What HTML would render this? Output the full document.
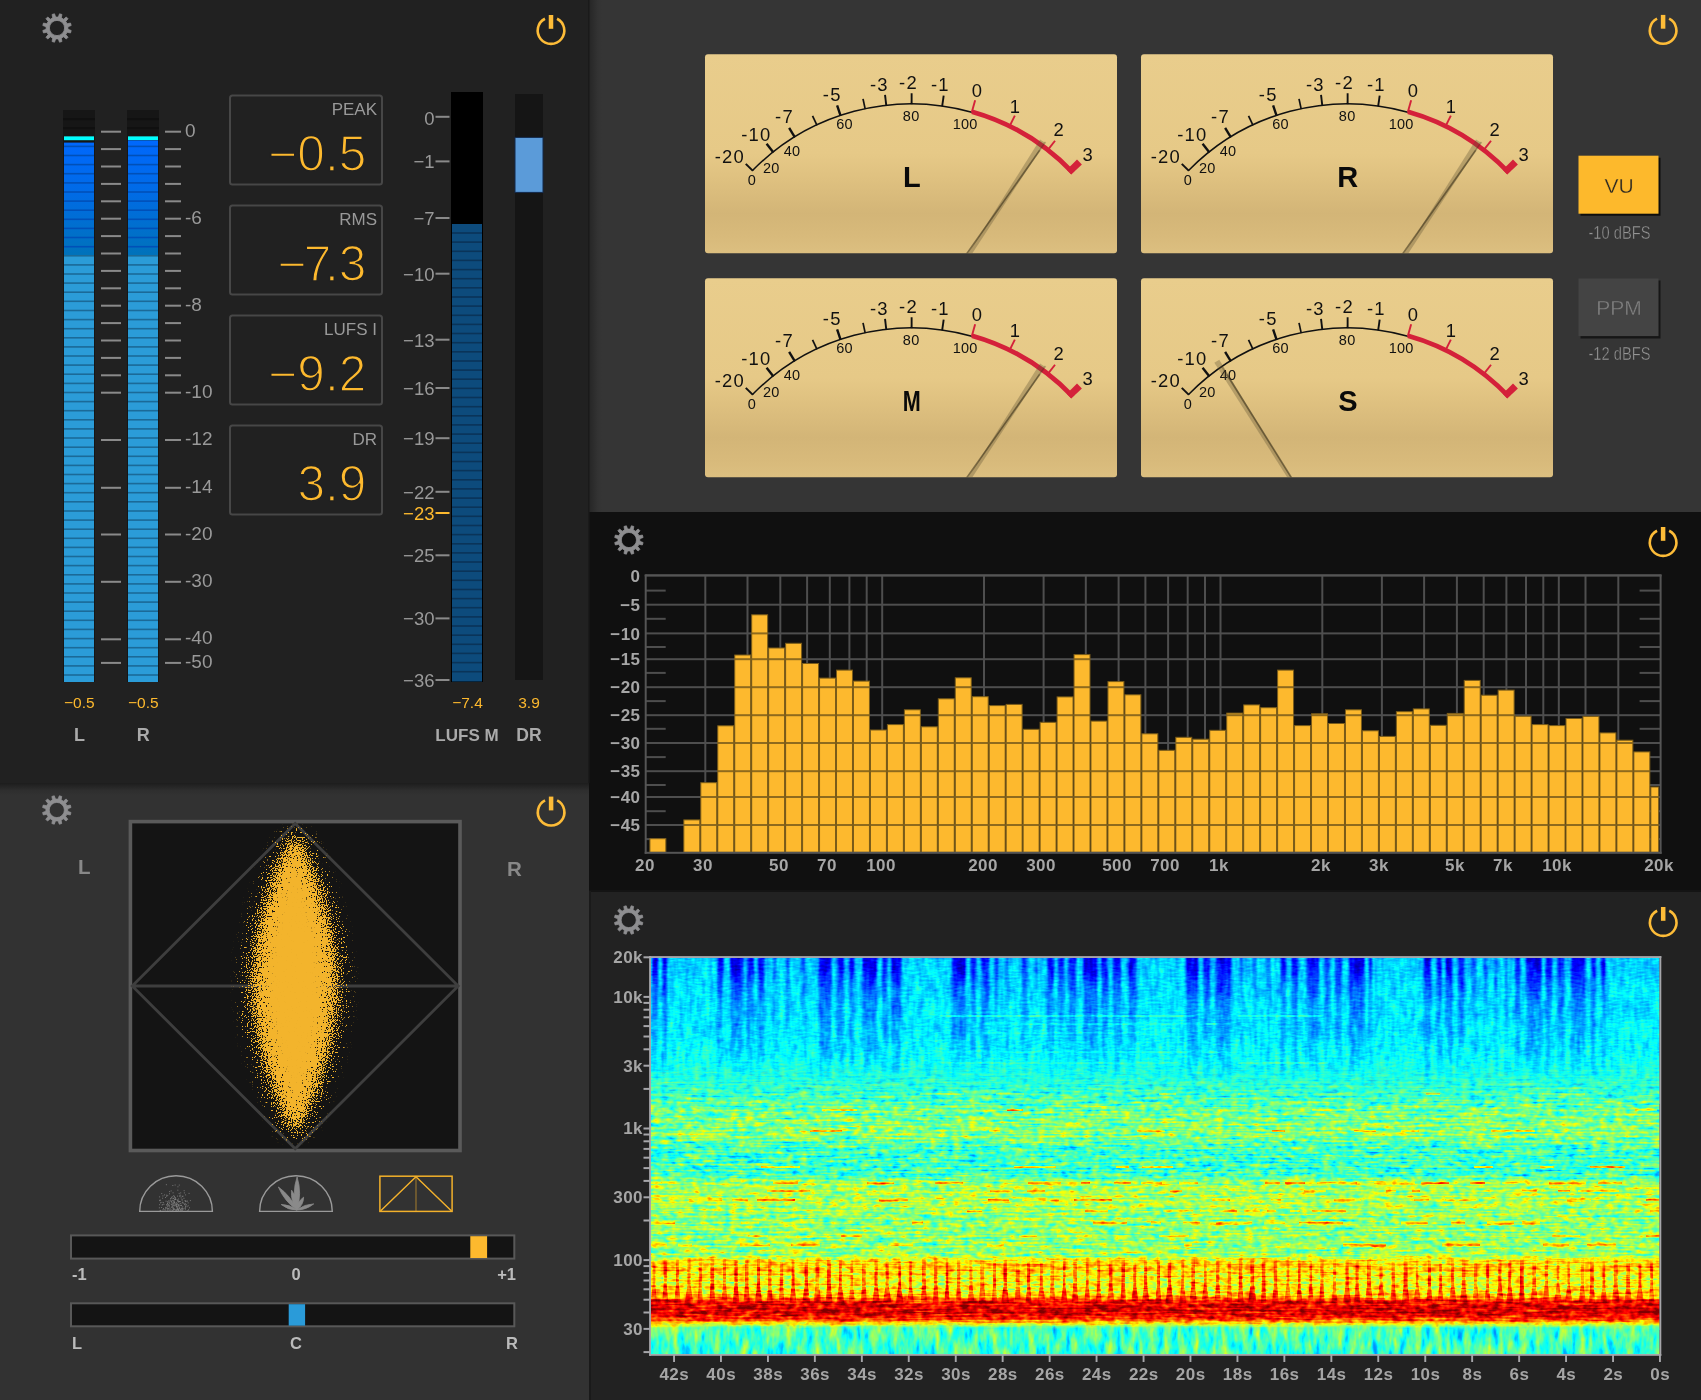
<!DOCTYPE html>
<html><head><meta charset="utf-8"><title>Audio Meters</title>
<style>
html,body{margin:0;padding:0;background:#222;overflow:hidden}
#app{position:relative;width:1701px;height:1400px;overflow:hidden;font-family:"Liberation Sans",Arial,sans-serif}
svg{display:block;position:absolute;left:0;top:0;will-change:transform}
text{white-space:pre}
</style></head><body><div id="app">
<svg width="1701" height="1400" viewBox="0 0 1701 1400" font-family="'Liberation Sans', Arial, sans-serif"><defs><linearGradient id="gbl" x1="0" y1="0" x2="0" y2="1"><stop offset="0" stop-color="#1d1d1d"/><stop offset="0.012" stop-color="#2e2e2e"/><stop offset="0.02" stop-color="#323232"/><stop offset="1" stop-color="#323232"/></linearGradient><linearGradient id="gvu" x1="0" y1="0" x2="1" y2="0"><stop offset="0" stop-color="#262626"/><stop offset="0.008" stop-color="#333"/><stop offset="0.012" stop-color="#353535"/><stop offset="1" stop-color="#353535"/></linearGradient><linearGradient id="gm63" gradientUnits="userSpaceOnUse" x1="0" y1="142.6" x2="0" y2="255"><stop offset="0" stop-color="#0068fc"/><stop offset="0.45" stop-color="#006be6"/><stop offset="1" stop-color="#0072ba"/></linearGradient><linearGradient id="gm127" gradientUnits="userSpaceOnUse" x1="0" y1="140.4" x2="0" y2="255"><stop offset="0" stop-color="#0068fc"/><stop offset="0.45" stop-color="#006be6"/><stop offset="1" stop-color="#0072ba"/></linearGradient><linearGradient id="gvub" x1="0" y1="0" x2="0" y2="1"><stop offset="0" stop-color="#e9cd8c"/><stop offset="0.5" stop-color="#e6c987"/><stop offset="0.62" stop-color="#dfc180"/><stop offset="0.8" stop-color="#d3b577"/><stop offset="0.92" stop-color="#d8ba7b"/><stop offset="1" stop-color="#dcbf80"/></linearGradient><clipPath id="cv705_54"><rect x="705" y="54.3" width="412" height="199" rx="3"/></clipPath><clipPath id="cv1141_54"><rect x="1141" y="54.3" width="412" height="199" rx="3"/></clipPath><clipPath id="cv705_278"><rect x="705" y="278.3" width="412" height="199" rx="3"/></clipPath><clipPath id="cv1141_278"><rect x="1141" y="278.3" width="412" height="199" rx="3"/></clipPath><clipPath id="cbars"><rect x="649.90" y="838.7" width="15.96" height="13.6"/><rect x="683.83" y="819.9" width="15.96" height="32.4"/><rect x="700.79" y="782.7" width="15.96" height="69.6"/><rect x="717.76" y="725.8" width="15.96" height="126.5"/><rect x="734.73" y="655.0" width="15.96" height="197.3"/><rect x="751.69" y="614.8" width="15.96" height="237.5"/><rect x="768.65" y="648.0" width="15.96" height="204.3"/><rect x="785.62" y="643.3" width="15.96" height="209.0"/><rect x="802.59" y="663.5" width="15.96" height="188.8"/><rect x="819.55" y="678.1" width="15.96" height="174.2"/><rect x="836.51" y="670.1" width="15.96" height="182.2"/><rect x="853.48" y="681.1" width="15.96" height="171.2"/><rect x="870.44" y="730.0" width="15.96" height="122.3"/><rect x="887.41" y="724.6" width="15.96" height="127.7"/><rect x="904.38" y="709.8" width="15.96" height="142.5"/><rect x="921.34" y="726.8" width="15.96" height="125.5"/><rect x="938.30" y="698.8" width="15.96" height="153.5"/><rect x="955.27" y="677.8" width="15.96" height="174.5"/><rect x="972.23" y="696.7" width="15.96" height="155.6"/><rect x="989.20" y="705.6" width="15.96" height="146.7"/><rect x="1006.16" y="704.4" width="15.96" height="147.9"/><rect x="1023.13" y="729.3" width="15.96" height="123.0"/><rect x="1040.10" y="722.3" width="15.96" height="130.0"/><rect x="1057.06" y="696.9" width="15.96" height="155.4"/><rect x="1074.03" y="654.6" width="15.96" height="197.7"/><rect x="1090.99" y="721.1" width="15.96" height="131.2"/><rect x="1107.95" y="681.6" width="15.96" height="170.7"/><rect x="1124.92" y="694.8" width="15.96" height="157.5"/><rect x="1141.88" y="733.8" width="15.96" height="118.5"/><rect x="1158.85" y="750.3" width="15.96" height="102.0"/><rect x="1175.82" y="737.3" width="15.96" height="115.0"/><rect x="1192.78" y="739.2" width="15.96" height="113.1"/><rect x="1209.74" y="730.3" width="15.96" height="122.0"/><rect x="1226.71" y="713.1" width="15.96" height="139.2"/><rect x="1243.67" y="704.9" width="15.96" height="147.4"/><rect x="1260.64" y="707.7" width="15.96" height="144.6"/><rect x="1277.61" y="670.1" width="15.96" height="182.2"/><rect x="1294.57" y="725.6" width="15.96" height="126.7"/><rect x="1311.53" y="713.8" width="15.96" height="138.5"/><rect x="1328.50" y="723.5" width="15.96" height="128.8"/><rect x="1345.46" y="709.8" width="15.96" height="142.5"/><rect x="1362.43" y="730.8" width="15.96" height="121.5"/><rect x="1379.39" y="736.4" width="15.96" height="115.9"/><rect x="1396.36" y="711.7" width="15.96" height="140.6"/><rect x="1413.32" y="708.9" width="15.96" height="143.4"/><rect x="1430.29" y="725.3" width="15.96" height="127.0"/><rect x="1447.26" y="713.4" width="15.96" height="138.9"/><rect x="1464.22" y="680.4" width="15.96" height="171.9"/><rect x="1481.18" y="695.2" width="15.96" height="157.1"/><rect x="1498.15" y="690.1" width="15.96" height="162.2"/><rect x="1515.12" y="716.2" width="15.96" height="136.1"/><rect x="1532.08" y="724.6" width="15.96" height="127.7"/><rect x="1549.05" y="725.6" width="15.96" height="126.7"/><rect x="1566.01" y="718.5" width="15.96" height="133.8"/><rect x="1582.97" y="716.4" width="15.96" height="135.9"/><rect x="1599.94" y="732.9" width="15.96" height="119.4"/><rect x="1616.90" y="740.2" width="15.96" height="112.1"/><rect x="1633.87" y="751.9" width="15.96" height="100.4"/><rect x="1650.84" y="787.0" width="7.76" height="65.3"/></clipPath><filter id="speck" filterUnits="userSpaceOnUse" x="132.2" y="823.4" width="326.0" height="325.30000000000007" color-interpolation-filters="sRGB">
<feGaussianBlur in="SourceAlpha" stdDeviation="9.5 4" result="b"/>
<feTurbulence type="fractalNoise" baseFrequency="0.8" numOctaves="1" seed="2" result="t"/>
<feColorMatrix in="t" type="matrix" values="0 0 0 0 0 0 0 0 0 0 0 0 0 0 0 2.6 0 0 0 -0.8" result="n"/>
<feComposite in="b" in2="n" operator="arithmetic" k1="0" k2="1.07" k3="1" k4="-1.0" result="m"/>
<feComponentTransfer in="m" result="m2"><feFuncA type="linear" slope="14" intercept="0"/></feComponentTransfer>
<feFlood flood-color="#f3b42c" result="c"/>
<feComposite in="c" in2="m2" operator="in"/>
</filter><filter id="jetA" filterUnits="userSpaceOnUse" x="645" y="952" width="1020.5" height="158" color-interpolation-filters="sRGB">
<feTurbulence type="fractalNoise" baseFrequency="0.2 0.05" numOctaves="2" seed="11" result="t1"/>
<feColorMatrix in="t1" type="matrix" values="1 0 0 0 0 1 0 0 0 0 1 0 0 0 0 0 0 0 0 1" result="n1"/>
<feTurbulence type="fractalNoise" baseFrequency="0.12 0.5" numOctaves="2" seed="5" result="t2"/>
<feColorMatrix in="t2" type="matrix" values="1 0 0 0 0 1 0 0 0 0 1 0 0 0 0 0 0 0 0 1" result="n2"/>
<feComposite in="n1" in2="n2" operator="arithmetic" k1="0" k2="0.55" k3="0.45" k4="0" result="n"/>
<feGaussianBlur in="SourceGraphic" stdDeviation="1.3 0.4" result="sg"/>
<feComposite in="sg" in2="n" operator="arithmetic" k1="0" k2="1" k3="0.3" k4="-0.15" result="v"/>
<feComponentTransfer in="v">
<feFuncR type="table" tableValues="0 0 0 0 0.5 1 1 1 0.5"/>
<feFuncG type="table" tableValues="0 0 0.5 1 1 1 0.5 0 0"/>
<feFuncB type="table" tableValues="0.5 1 1 1 0.5 0 0 0 0"/>
<feFuncA type="linear" slope="0" intercept="1"/>
</feComponentTransfer></filter><filter id="jetB" filterUnits="userSpaceOnUse" x="645" y="1056" width="1020.5" height="280" color-interpolation-filters="sRGB">
<feTurbulence type="fractalNoise" baseFrequency="0.13 0.22" numOctaves="2" seed="3" result="t1"/>
<feColorMatrix in="t1" type="matrix" values="1 0 0 0 0 1 0 0 0 0 1 0 0 0 0 0 0 0 0 1" result="n1"/>
<feTurbulence type="fractalNoise" baseFrequency="0.022 0.5" numOctaves="2" seed="8" result="t2"/>
<feColorMatrix in="t2" type="matrix" values="1 0 0 0 0 1 0 0 0 0 1 0 0 0 0 0 0 0 0 1" result="n2"/>
<feComposite in="n1" in2="n2" operator="arithmetic" k1="0" k2="0.55" k3="0.45" k4="0" result="n"/>
<feGaussianBlur in="SourceGraphic" stdDeviation="0.7 0.4" result="sg"/>
<feComposite in="sg" in2="n" operator="arithmetic" k1="0" k2="1" k3="0.66" k4="-0.33" result="v"/>
<feComponentTransfer in="v">
<feFuncR type="table" tableValues="0 0 0 0 0.5 1 1 1 0.5"/>
<feFuncG type="table" tableValues="0 0 0.5 1 1 1 0.5 0 0"/>
<feFuncB type="table" tableValues="0.5 1 1 1 0.5 0 0 0 0"/>
<feFuncA type="linear" slope="0" intercept="1"/>
</feComponentTransfer></filter><filter id="jetC" filterUnits="userSpaceOnUse" x="645" y="1315" width="1020.5" height="45" color-interpolation-filters="sRGB">
<feTurbulence type="fractalNoise" baseFrequency="0.14 0.035" numOctaves="2" seed="21" result="t1"/>
<feColorMatrix in="t1" type="matrix" values="1 0 0 0 0 1 0 0 0 0 1 0 0 0 0 0 0 0 0 1" result="n1"/>
<feTurbulence type="fractalNoise" baseFrequency="0.3 0.12" numOctaves="2" seed="4" result="t2"/>
<feColorMatrix in="t2" type="matrix" values="1 0 0 0 0 1 0 0 0 0 1 0 0 0 0 0 0 0 0 1" result="n2"/>
<feComposite in="n1" in2="n2" operator="arithmetic" k1="0" k2="0.75" k3="0.25" k4="0" result="n"/>
<feGaussianBlur in="SourceGraphic" stdDeviation="1.3 0.4" result="sg"/>
<feComposite in="sg" in2="n" operator="arithmetic" k1="0" k2="1" k3="0.58" k4="-0.29" result="v"/>
<feComponentTransfer in="v">
<feFuncR type="table" tableValues="0 0 0 0 0.5 1 1 1 0.5"/>
<feFuncG type="table" tableValues="0 0 0.5 1 1 1 0.5 0 0"/>
<feFuncB type="table" tableValues="0.5 1 1 1 0.5 0 0 0 0"/>
<feFuncA type="linear" slope="0" intercept="1"/>
</feComponentTransfer></filter><linearGradient id="sgb" gradientUnits="userSpaceOnUse" x1="0" y1="958" x2="0" y2="1354"><stop offset="0.0000" stop-color="#545454"/><stop offset="0.0682" stop-color="#585858"/><stop offset="0.2071" stop-color="#5e5e5e"/><stop offset="0.2828" stop-color="#656565"/><stop offset="0.3460" stop-color="#6e6e6e"/><stop offset="0.3889" stop-color="#7c7c7c"/><stop offset="0.4470" stop-color="#838383"/><stop offset="0.4798" stop-color="#6f6f6f"/><stop offset="0.5480" stop-color="#6e6e6e"/><stop offset="0.5657" stop-color="#888888"/><stop offset="0.6237" stop-color="#8c8c8c"/><stop offset="0.6490" stop-color="#828282"/><stop offset="0.7500" stop-color="#858585"/><stop offset="0.7652" stop-color="#a3a3a3"/><stop offset="0.7828" stop-color="#ababab"/><stop offset="0.8005" stop-color="#9d9d9d"/><stop offset="0.8384" stop-color="#9c9c9c"/><stop offset="0.8561" stop-color="#adadad"/><stop offset="0.8662" stop-color="#d9d9d9"/><stop offset="0.8788" stop-color="#e6e6e6"/><stop offset="0.8965" stop-color="#e9e9e9"/><stop offset="0.9116" stop-color="#d6d6d6"/><stop offset="0.9242" stop-color="#9e9e9e"/><stop offset="0.9343" stop-color="#737373"/><stop offset="0.9596" stop-color="#707070"/><stop offset="1.0000" stop-color="#707070"/></linearGradient><linearGradient id="sgs" gradientUnits="userSpaceOnUse" x1="0" y1="958" x2="0" y2="1085"><stop offset="0.000" stop-color="#000" stop-opacity="0.7"/><stop offset="0.110" stop-color="#000" stop-opacity="0.62"/><stop offset="0.220" stop-color="#000" stop-opacity="0.42"/><stop offset="0.331" stop-color="#000" stop-opacity="0.3"/><stop offset="0.567" stop-color="#000" stop-opacity="0.22"/><stop offset="0.764" stop-color="#000" stop-opacity="0.15"/><stop offset="1.000" stop-color="#000" stop-opacity="0"/></linearGradient><linearGradient id="sgk" gradientUnits="userSpaceOnUse" x1="0" y1="1256" x2="0" y2="1303"><stop offset="0" stop-color="#fff" stop-opacity="0"/><stop offset="0.25" stop-color="#fff" stop-opacity="0.5"/><stop offset="0.8" stop-color="#fff" stop-opacity="0.62"/><stop offset="1" stop-color="#fff" stop-opacity="0.4"/></linearGradient><clipPath id="cspA"><rect x="651" y="958" width="1008.5" height="146"/></clipPath><linearGradient id="mgB" gradientUnits="userSpaceOnUse" x1="0" y1="1062" x2="0" y2="1104"><stop offset="0" stop-color="#000"/><stop offset="1" stop-color="#fff"/></linearGradient><mask id="mskB" maskUnits="userSpaceOnUse" x="651" y="1062" width="1008.5" height="268"><rect x="651" y="1062" width="1008.5" height="268" fill="url(#mgB)"/></mask><linearGradient id="mgC" gradientUnits="userSpaceOnUse" x1="0" y1="1321" x2="0" y2="1330"><stop offset="0" stop-color="#000"/><stop offset="1" stop-color="#fff"/></linearGradient><mask id="mskC" maskUnits="userSpaceOnUse" x="651" y="1321" width="1008.5" height="33"><rect x="651" y="1321" width="1008.5" height="33" fill="url(#mgC)"/></mask></defs>
<rect x="0" y="0" width="1701" height="1400" fill="#222"/>
<rect x="0" y="0" width="589" height="783" fill="#212121"/>
<rect x="0" y="783" width="589" height="617" fill="url(#gbl)"/>
<rect x="589" y="0" width="1112" height="512" fill="url(#gvu)"/>
<rect x="589" y="512" width="1112" height="379" fill="#101010"/>
<rect x="589" y="891" width="1112" height="509" fill="#222"/>
<rect x="589" y="890" width="1112" height="2" fill="#141414"/>
<rect x="589" y="891" width="2" height="509" fill="#1a1a1a"/>
<rect x="588" y="0" width="1.5" height="783" fill="#1a1a1a"/>
<path d="M67.92 29.34 L71.18 30.50 L70.53 32.93 L67.13 32.30 L65.78 34.62 L68.03 37.26 L66.26 39.03 L63.62 36.78 L61.30 38.13 L61.93 41.53 L59.50 42.18 L58.34 38.92 L55.66 38.92 L54.50 42.18 L52.07 41.53 L52.70 38.13 L50.38 36.78 L47.74 39.03 L45.97 37.26 L48.22 34.62 L46.87 32.30 L43.47 32.93 L42.82 30.50 L46.08 29.34 L46.08 26.66 L42.82 25.50 L43.47 23.07 L46.87 23.70 L48.22 21.38 L45.97 18.74 L47.74 16.97 L50.38 19.22 L52.70 17.87 L52.07 14.47 L54.50 13.82 L55.66 17.08 L58.34 17.08 L59.50 13.82 L61.93 14.47 L61.30 17.87 L63.62 19.22 L66.26 16.97 L68.03 18.74 L65.78 21.38 L67.13 23.70 L70.53 23.07 L71.18 25.50 L67.92 26.66Z M64.60 28.00 A7.6 7.6 0 1 0 49.40 28.00 A7.6 7.6 0 1 0 64.60 28.00Z" fill="#8e8e90" fill-rule="evenodd" stroke="#8e8e90" stroke-width="0.8" stroke-linejoin="round"/>
<path d="M557.04 18.75 A13.3 13.3 0 1 1 544.96 18.75" fill="none" stroke="#fdbc38" stroke-width="2.6"/>
<rect x="548.75" y="15.00" width="4.5" height="13.8" fill="#fdbc38"/>
<rect x="63" y="110" width="32" height="572" fill="#161616"/>
<rect x="63" y="118.1" width="32" height="2" fill="#101010"/>
<rect x="63" y="127.2" width="32" height="2" fill="#101010"/>
<rect x="64" y="136" width="30" height="1.3" fill="#1aa"/>
<rect x="64" y="137" width="30" height="3.2" fill="#0ff"/>
<rect x="64" y="142.6" width="30" height="112.4" fill="url(#gm63)"/>
<rect x="64" y="255" width="30" height="427" fill="#2b9cd8"/>
<rect x="64" y="145.6" width="30" height="1.6" fill="#0050b8"/>
<rect x="64" y="154.7" width="30" height="1.6" fill="#0050b8"/>
<rect x="64" y="163.8" width="30" height="1.6" fill="#0050b8"/>
<rect x="64" y="172.9" width="30" height="1.6" fill="#0050b8"/>
<rect x="64" y="182.1" width="30" height="1.6" fill="#0050b8"/>
<rect x="64" y="191.2" width="30" height="1.6" fill="#0050b8"/>
<rect x="64" y="200.3" width="30" height="1.6" fill="#0050b8"/>
<rect x="64" y="209.4" width="30" height="1.6" fill="#0050b8"/>
<rect x="64" y="218.5" width="30" height="1.6" fill="#0050b8"/>
<rect x="64" y="227.6" width="30" height="1.6" fill="#0050b8"/>
<rect x="64" y="236.7" width="30" height="1.6" fill="#0050b8"/>
<rect x="64" y="245.9" width="30" height="1.6" fill="#0050b8"/>
<rect x="64" y="255.0" width="30" height="1.6" fill="#1b6a98"/>
<rect x="64" y="264.1" width="30" height="1.6" fill="#1b6a98"/>
<rect x="64" y="273.2" width="30" height="1.6" fill="#1b6a98"/>
<rect x="64" y="282.3" width="30" height="1.6" fill="#1b6a98"/>
<rect x="64" y="291.4" width="30" height="1.6" fill="#1b6a98"/>
<rect x="64" y="300.5" width="30" height="1.6" fill="#1b6a98"/>
<rect x="64" y="309.7" width="30" height="1.6" fill="#1b6a98"/>
<rect x="64" y="318.8" width="30" height="1.6" fill="#1b6a98"/>
<rect x="64" y="327.9" width="30" height="1.6" fill="#1b6a98"/>
<rect x="64" y="337.0" width="30" height="1.6" fill="#1b6a98"/>
<rect x="64" y="346.1" width="30" height="1.6" fill="#1b6a98"/>
<rect x="64" y="355.2" width="30" height="1.6" fill="#1b6a98"/>
<rect x="64" y="364.3" width="30" height="1.6" fill="#1b6a98"/>
<rect x="64" y="373.4" width="30" height="1.6" fill="#1b6a98"/>
<rect x="64" y="382.6" width="30" height="1.6" fill="#1b6a98"/>
<rect x="64" y="391.7" width="30" height="1.6" fill="#1b6a98"/>
<rect x="64" y="400.8" width="30" height="1.6" fill="#1b6a98"/>
<rect x="64" y="409.9" width="30" height="1.6" fill="#1b6a98"/>
<rect x="64" y="419.0" width="30" height="1.6" fill="#1b6a98"/>
<rect x="64" y="428.1" width="30" height="1.6" fill="#1b6a98"/>
<rect x="64" y="437.2" width="30" height="1.6" fill="#1b6a98"/>
<rect x="64" y="446.4" width="30" height="1.6" fill="#1b6a98"/>
<rect x="64" y="455.5" width="30" height="1.6" fill="#1b6a98"/>
<rect x="64" y="464.6" width="30" height="1.6" fill="#1b6a98"/>
<rect x="64" y="473.7" width="30" height="1.6" fill="#1b6a98"/>
<rect x="64" y="482.8" width="30" height="1.6" fill="#1b6a98"/>
<rect x="64" y="491.9" width="30" height="1.6" fill="#1b6a98"/>
<rect x="64" y="501.0" width="30" height="1.6" fill="#1b6a98"/>
<rect x="64" y="510.2" width="30" height="1.6" fill="#1b6a98"/>
<rect x="64" y="519.3" width="30" height="1.6" fill="#1b6a98"/>
<rect x="64" y="528.4" width="30" height="1.6" fill="#1b6a98"/>
<rect x="64" y="537.5" width="30" height="1.6" fill="#1b6a98"/>
<rect x="64" y="546.6" width="30" height="1.6" fill="#1b6a98"/>
<rect x="64" y="555.7" width="30" height="1.6" fill="#1b6a98"/>
<rect x="64" y="564.8" width="30" height="1.6" fill="#1b6a98"/>
<rect x="64" y="574.0" width="30" height="1.6" fill="#1b6a98"/>
<rect x="64" y="583.1" width="30" height="1.6" fill="#1b6a98"/>
<rect x="64" y="592.2" width="30" height="1.6" fill="#1b6a98"/>
<rect x="64" y="601.3" width="30" height="1.6" fill="#1b6a98"/>
<rect x="64" y="610.4" width="30" height="1.6" fill="#1b6a98"/>
<rect x="64" y="619.5" width="30" height="1.6" fill="#1b6a98"/>
<rect x="64" y="628.6" width="30" height="1.6" fill="#1b6a98"/>
<rect x="64" y="637.8" width="30" height="1.6" fill="#1b6a98"/>
<rect x="64" y="646.9" width="30" height="1.6" fill="#1b6a98"/>
<rect x="64" y="656.0" width="30" height="1.6" fill="#1b6a98"/>
<rect x="64" y="665.1" width="30" height="1.6" fill="#1b6a98"/>
<rect x="64" y="674.2" width="30" height="1.6" fill="#1b6a98"/>
<rect x="127" y="110" width="32" height="572" fill="#161616"/>
<rect x="127" y="118.1" width="32" height="2" fill="#101010"/>
<rect x="127" y="127.2" width="32" height="2" fill="#101010"/>
<rect x="128" y="136" width="30" height="1.3" fill="#1aa"/>
<rect x="128" y="137" width="30" height="3.2" fill="#0ff"/>
<rect x="128" y="140.4" width="30" height="114.6" fill="url(#gm127)"/>
<rect x="128" y="255" width="30" height="427" fill="#2b9cd8"/>
<rect x="128" y="145.6" width="30" height="1.6" fill="#0050b8"/>
<rect x="128" y="154.7" width="30" height="1.6" fill="#0050b8"/>
<rect x="128" y="163.8" width="30" height="1.6" fill="#0050b8"/>
<rect x="128" y="172.9" width="30" height="1.6" fill="#0050b8"/>
<rect x="128" y="182.1" width="30" height="1.6" fill="#0050b8"/>
<rect x="128" y="191.2" width="30" height="1.6" fill="#0050b8"/>
<rect x="128" y="200.3" width="30" height="1.6" fill="#0050b8"/>
<rect x="128" y="209.4" width="30" height="1.6" fill="#0050b8"/>
<rect x="128" y="218.5" width="30" height="1.6" fill="#0050b8"/>
<rect x="128" y="227.6" width="30" height="1.6" fill="#0050b8"/>
<rect x="128" y="236.7" width="30" height="1.6" fill="#0050b8"/>
<rect x="128" y="245.9" width="30" height="1.6" fill="#0050b8"/>
<rect x="128" y="255.0" width="30" height="1.6" fill="#1b6a98"/>
<rect x="128" y="264.1" width="30" height="1.6" fill="#1b6a98"/>
<rect x="128" y="273.2" width="30" height="1.6" fill="#1b6a98"/>
<rect x="128" y="282.3" width="30" height="1.6" fill="#1b6a98"/>
<rect x="128" y="291.4" width="30" height="1.6" fill="#1b6a98"/>
<rect x="128" y="300.5" width="30" height="1.6" fill="#1b6a98"/>
<rect x="128" y="309.7" width="30" height="1.6" fill="#1b6a98"/>
<rect x="128" y="318.8" width="30" height="1.6" fill="#1b6a98"/>
<rect x="128" y="327.9" width="30" height="1.6" fill="#1b6a98"/>
<rect x="128" y="337.0" width="30" height="1.6" fill="#1b6a98"/>
<rect x="128" y="346.1" width="30" height="1.6" fill="#1b6a98"/>
<rect x="128" y="355.2" width="30" height="1.6" fill="#1b6a98"/>
<rect x="128" y="364.3" width="30" height="1.6" fill="#1b6a98"/>
<rect x="128" y="373.4" width="30" height="1.6" fill="#1b6a98"/>
<rect x="128" y="382.6" width="30" height="1.6" fill="#1b6a98"/>
<rect x="128" y="391.7" width="30" height="1.6" fill="#1b6a98"/>
<rect x="128" y="400.8" width="30" height="1.6" fill="#1b6a98"/>
<rect x="128" y="409.9" width="30" height="1.6" fill="#1b6a98"/>
<rect x="128" y="419.0" width="30" height="1.6" fill="#1b6a98"/>
<rect x="128" y="428.1" width="30" height="1.6" fill="#1b6a98"/>
<rect x="128" y="437.2" width="30" height="1.6" fill="#1b6a98"/>
<rect x="128" y="446.4" width="30" height="1.6" fill="#1b6a98"/>
<rect x="128" y="455.5" width="30" height="1.6" fill="#1b6a98"/>
<rect x="128" y="464.6" width="30" height="1.6" fill="#1b6a98"/>
<rect x="128" y="473.7" width="30" height="1.6" fill="#1b6a98"/>
<rect x="128" y="482.8" width="30" height="1.6" fill="#1b6a98"/>
<rect x="128" y="491.9" width="30" height="1.6" fill="#1b6a98"/>
<rect x="128" y="501.0" width="30" height="1.6" fill="#1b6a98"/>
<rect x="128" y="510.2" width="30" height="1.6" fill="#1b6a98"/>
<rect x="128" y="519.3" width="30" height="1.6" fill="#1b6a98"/>
<rect x="128" y="528.4" width="30" height="1.6" fill="#1b6a98"/>
<rect x="128" y="537.5" width="30" height="1.6" fill="#1b6a98"/>
<rect x="128" y="546.6" width="30" height="1.6" fill="#1b6a98"/>
<rect x="128" y="555.7" width="30" height="1.6" fill="#1b6a98"/>
<rect x="128" y="564.8" width="30" height="1.6" fill="#1b6a98"/>
<rect x="128" y="574.0" width="30" height="1.6" fill="#1b6a98"/>
<rect x="128" y="583.1" width="30" height="1.6" fill="#1b6a98"/>
<rect x="128" y="592.2" width="30" height="1.6" fill="#1b6a98"/>
<rect x="128" y="601.3" width="30" height="1.6" fill="#1b6a98"/>
<rect x="128" y="610.4" width="30" height="1.6" fill="#1b6a98"/>
<rect x="128" y="619.5" width="30" height="1.6" fill="#1b6a98"/>
<rect x="128" y="628.6" width="30" height="1.6" fill="#1b6a98"/>
<rect x="128" y="637.8" width="30" height="1.6" fill="#1b6a98"/>
<rect x="128" y="646.9" width="30" height="1.6" fill="#1b6a98"/>
<rect x="128" y="656.0" width="30" height="1.6" fill="#1b6a98"/>
<rect x="128" y="665.1" width="30" height="1.6" fill="#1b6a98"/>
<rect x="128" y="674.2" width="30" height="1.6" fill="#1b6a98"/>
<rect x="101" y="130.7" width="20" height="2" fill="#8a8a8a"/>
<rect x="165" y="130.7" width="16" height="2" fill="#8a8a8a"/>
<rect x="101" y="148.1" width="20" height="2" fill="#8a8a8a"/>
<rect x="165" y="148.1" width="16" height="2" fill="#8a8a8a"/>
<rect x="101" y="165.5" width="20" height="2" fill="#8a8a8a"/>
<rect x="165" y="165.5" width="16" height="2" fill="#8a8a8a"/>
<rect x="101" y="182.9" width="20" height="2" fill="#8a8a8a"/>
<rect x="165" y="182.9" width="16" height="2" fill="#8a8a8a"/>
<rect x="101" y="200.3" width="20" height="2" fill="#8a8a8a"/>
<rect x="165" y="200.3" width="16" height="2" fill="#8a8a8a"/>
<rect x="101" y="217.7" width="20" height="2" fill="#8a8a8a"/>
<rect x="165" y="217.7" width="16" height="2" fill="#8a8a8a"/>
<rect x="101" y="235.1" width="20" height="2" fill="#8a8a8a"/>
<rect x="165" y="235.1" width="16" height="2" fill="#8a8a8a"/>
<rect x="101" y="252.5" width="20" height="2" fill="#8a8a8a"/>
<rect x="165" y="252.5" width="16" height="2" fill="#8a8a8a"/>
<rect x="101" y="269.9" width="20" height="2" fill="#8a8a8a"/>
<rect x="165" y="269.9" width="16" height="2" fill="#8a8a8a"/>
<rect x="101" y="287.3" width="20" height="2" fill="#8a8a8a"/>
<rect x="165" y="287.3" width="16" height="2" fill="#8a8a8a"/>
<rect x="101" y="304.7" width="20" height="2" fill="#8a8a8a"/>
<rect x="165" y="304.7" width="16" height="2" fill="#8a8a8a"/>
<rect x="101" y="322.1" width="20" height="2" fill="#8a8a8a"/>
<rect x="165" y="322.1" width="16" height="2" fill="#8a8a8a"/>
<rect x="101" y="339.5" width="20" height="2" fill="#8a8a8a"/>
<rect x="165" y="339.5" width="16" height="2" fill="#8a8a8a"/>
<rect x="101" y="356.9" width="20" height="2" fill="#8a8a8a"/>
<rect x="165" y="356.9" width="16" height="2" fill="#8a8a8a"/>
<rect x="101" y="374.3" width="20" height="2" fill="#8a8a8a"/>
<rect x="165" y="374.3" width="16" height="2" fill="#8a8a8a"/>
<rect x="101" y="391.7" width="20" height="2" fill="#8a8a8a"/>
<rect x="165" y="391.7" width="16" height="2" fill="#8a8a8a"/>
<rect x="101" y="439.0" width="20" height="2" fill="#8a8a8a"/>
<rect x="165" y="439.0" width="16" height="2" fill="#8a8a8a"/>
<rect x="101" y="486.8" width="20" height="2" fill="#8a8a8a"/>
<rect x="165" y="486.8" width="16" height="2" fill="#8a8a8a"/>
<rect x="101" y="533.5" width="20" height="2" fill="#8a8a8a"/>
<rect x="165" y="533.5" width="16" height="2" fill="#8a8a8a"/>
<rect x="101" y="580.8" width="20" height="2" fill="#8a8a8a"/>
<rect x="165" y="580.8" width="16" height="2" fill="#8a8a8a"/>
<rect x="101" y="638.3" width="20" height="2" fill="#8a8a8a"/>
<rect x="165" y="638.3" width="16" height="2" fill="#8a8a8a"/>
<rect x="101" y="661.9" width="20" height="2" fill="#8a8a8a"/>
<rect x="165" y="661.9" width="16" height="2" fill="#8a8a8a"/>
<text x="185.0" y="136.7" font-size="19" fill="#999" text-anchor="start" font-weight="normal" >0</text>
<text x="185.0" y="223.7" font-size="19" fill="#999" text-anchor="start" font-weight="normal" >-6</text>
<text x="185.0" y="310.7" font-size="19" fill="#999" text-anchor="start" font-weight="normal" >-8</text>
<text x="185.0" y="397.7" font-size="19" fill="#999" text-anchor="start" font-weight="normal" >-10</text>
<text x="185.0" y="445.0" font-size="19" fill="#999" text-anchor="start" font-weight="normal" >-12</text>
<text x="185.0" y="492.8" font-size="19" fill="#999" text-anchor="start" font-weight="normal" >-14</text>
<text x="185.0" y="539.5" font-size="19" fill="#999" text-anchor="start" font-weight="normal" >-20</text>
<text x="185.0" y="586.8" font-size="19" fill="#999" text-anchor="start" font-weight="normal" >-30</text>
<text x="185.0" y="644.3" font-size="19" fill="#999" text-anchor="start" font-weight="normal" >-40</text>
<text x="185.0" y="667.9" font-size="19" fill="#999" text-anchor="start" font-weight="normal" >-50</text>
<text x="79.3" y="707.6" font-size="15.5" fill="#fdb92e" text-anchor="middle" font-weight="normal" >−0.5</text>
<text x="143.3" y="707.6" font-size="15.5" fill="#fdb92e" text-anchor="middle" font-weight="normal" >−0.5</text>
<text x="467.5" y="707.6" font-size="15.5" fill="#fdb92e" text-anchor="middle" font-weight="normal" >−7.4</text>
<text x="529.0" y="707.6" font-size="15.5" fill="#fdb92e" text-anchor="middle" font-weight="normal" >3.9</text>
<text x="79.4" y="741.0" font-size="18" fill="#aaa" text-anchor="middle" font-weight="bold" >L</text>
<text x="143.3" y="741.0" font-size="18" fill="#aaa" text-anchor="middle" font-weight="bold" >R</text>
<text x="467.0" y="741.0" font-size="17" fill="#aaa" text-anchor="middle" font-weight="bold" >LUFS M</text>
<text x="529.0" y="741.0" font-size="17.5" fill="#aaa" text-anchor="middle" font-weight="bold" >DR</text>
<rect x="230" y="95.5" width="152" height="89" rx="2.5" fill="none" stroke="#474747" stroke-width="2"/>
<text x="377.0" y="114.9" font-size="17" fill="#999" text-anchor="end" font-weight="normal" >PEAK</text>
<text x="366.2" y="171.1" font-size="49.5" fill="#fdb92e" text-anchor="end" font-weight="normal" stroke="#212121" stroke-width="1.5" paint-order="fill stroke">−0.5</text>
<rect x="230" y="205.5" width="152" height="89" rx="2.5" fill="none" stroke="#474747" stroke-width="2"/>
<text x="377.0" y="224.9" font-size="17" fill="#999" text-anchor="end" font-weight="normal" >RMS</text>
<text x="366.2" y="281.1" font-size="49.5" fill="#fdb92e" text-anchor="end" font-weight="normal" stroke="#212121" stroke-width="1.5" paint-order="fill stroke">−<tspan dx="-3.1">7</tspan><tspan dx="-6.3">.3</tspan></text>
<rect x="230" y="315.5" width="152" height="89" rx="2.5" fill="none" stroke="#474747" stroke-width="2"/>
<text x="377.0" y="334.9" font-size="17" fill="#999" text-anchor="end" font-weight="normal" >LUFS I</text>
<text x="366.2" y="391.1" font-size="49.5" fill="#fdb92e" text-anchor="end" font-weight="normal" stroke="#212121" stroke-width="1.5" paint-order="fill stroke">−9.2</text>
<rect x="230" y="425.5" width="152" height="89" rx="2.5" fill="none" stroke="#474747" stroke-width="2"/>
<text x="377.0" y="444.9" font-size="17" fill="#999" text-anchor="end" font-weight="normal" >DR</text>
<text x="366.2" y="501.1" font-size="49.5" fill="#fdb92e" text-anchor="end" font-weight="normal" stroke="#212121" stroke-width="1.5" paint-order="fill stroke">3.9</text>
<rect x="451" y="92" width="32" height="590" fill="#000"/>
<rect x="452" y="224" width="30" height="457.5" fill="#0d4b7c"/>
<rect x="452" y="232.2" width="30" height="1.6" fill="#0a3459"/>
<rect x="452" y="241.3" width="30" height="1.6" fill="#0a3459"/>
<rect x="452" y="250.5" width="30" height="1.6" fill="#0a3459"/>
<rect x="452" y="259.6" width="30" height="1.6" fill="#0a3459"/>
<rect x="452" y="268.8" width="30" height="1.6" fill="#0a3459"/>
<rect x="452" y="277.9" width="30" height="1.6" fill="#0a3459"/>
<rect x="452" y="287.0" width="30" height="1.6" fill="#0a3459"/>
<rect x="452" y="296.2" width="30" height="1.6" fill="#0a3459"/>
<rect x="452" y="305.3" width="30" height="1.6" fill="#0a3459"/>
<rect x="452" y="314.5" width="30" height="1.6" fill="#0a3459"/>
<rect x="452" y="323.6" width="30" height="1.6" fill="#0a3459"/>
<rect x="452" y="332.7" width="30" height="1.6" fill="#0a3459"/>
<rect x="452" y="341.9" width="30" height="1.6" fill="#0a3459"/>
<rect x="452" y="351.0" width="30" height="1.6" fill="#0a3459"/>
<rect x="452" y="360.2" width="30" height="1.6" fill="#0a3459"/>
<rect x="452" y="369.3" width="30" height="1.6" fill="#0a3459"/>
<rect x="452" y="378.4" width="30" height="1.6" fill="#0a3459"/>
<rect x="452" y="387.6" width="30" height="1.6" fill="#0a3459"/>
<rect x="452" y="396.7" width="30" height="1.6" fill="#0a3459"/>
<rect x="452" y="405.9" width="30" height="1.6" fill="#0a3459"/>
<rect x="452" y="415.0" width="30" height="1.6" fill="#0a3459"/>
<rect x="452" y="424.1" width="30" height="1.6" fill="#0a3459"/>
<rect x="452" y="433.3" width="30" height="1.6" fill="#0a3459"/>
<rect x="452" y="442.4" width="30" height="1.6" fill="#0a3459"/>
<rect x="452" y="451.6" width="30" height="1.6" fill="#0a3459"/>
<rect x="452" y="460.7" width="30" height="1.6" fill="#0a3459"/>
<rect x="452" y="469.8" width="30" height="1.6" fill="#0a3459"/>
<rect x="452" y="479.0" width="30" height="1.6" fill="#0a3459"/>
<rect x="452" y="488.1" width="30" height="1.6" fill="#0a3459"/>
<rect x="452" y="497.3" width="30" height="1.6" fill="#0a3459"/>
<rect x="452" y="506.4" width="30" height="1.6" fill="#0a3459"/>
<rect x="452" y="515.5" width="30" height="1.6" fill="#0a3459"/>
<rect x="452" y="524.7" width="30" height="1.6" fill="#0a3459"/>
<rect x="452" y="533.8" width="30" height="1.6" fill="#0a3459"/>
<rect x="452" y="543.0" width="30" height="1.6" fill="#0a3459"/>
<rect x="452" y="552.1" width="30" height="1.6" fill="#0a3459"/>
<rect x="452" y="561.2" width="30" height="1.6" fill="#0a3459"/>
<rect x="452" y="570.4" width="30" height="1.6" fill="#0a3459"/>
<rect x="452" y="579.5" width="30" height="1.6" fill="#0a3459"/>
<rect x="452" y="588.7" width="30" height="1.6" fill="#0a3459"/>
<rect x="452" y="597.8" width="30" height="1.6" fill="#0a3459"/>
<rect x="452" y="606.9" width="30" height="1.6" fill="#0a3459"/>
<rect x="452" y="616.1" width="30" height="1.6" fill="#0a3459"/>
<rect x="452" y="625.2" width="30" height="1.6" fill="#0a3459"/>
<rect x="452" y="634.4" width="30" height="1.6" fill="#0a3459"/>
<rect x="452" y="643.5" width="30" height="1.6" fill="#0a3459"/>
<rect x="452" y="652.6" width="30" height="1.6" fill="#0a3459"/>
<rect x="452" y="661.8" width="30" height="1.6" fill="#0a3459"/>
<rect x="452" y="670.9" width="30" height="1.6" fill="#0a3459"/>
<rect x="435.5" y="115.8" width="14" height="2" fill="#8a8a8a"/>
<text x="434.5" y="124.8" font-size="18.5" fill="#999" text-anchor="end" font-weight="normal" >0</text>
<rect x="435.5" y="160.4" width="14" height="2" fill="#8a8a8a"/>
<text x="434.5" y="168.3" font-size="18.5" fill="#999" text-anchor="end" font-weight="normal" >−1</text>
<rect x="435.5" y="217.0" width="14" height="2" fill="#8a8a8a"/>
<text x="434.5" y="224.9" font-size="18.5" fill="#999" text-anchor="end" font-weight="normal" >−7</text>
<rect x="435.5" y="272.7" width="14" height="2" fill="#8a8a8a"/>
<text x="434.5" y="280.6" font-size="18.5" fill="#999" text-anchor="end" font-weight="normal" >−10</text>
<rect x="435.5" y="338.7" width="14" height="2" fill="#8a8a8a"/>
<text x="434.5" y="346.6" font-size="18.5" fill="#999" text-anchor="end" font-weight="normal" >−13</text>
<rect x="435.5" y="387.0" width="14" height="2" fill="#8a8a8a"/>
<text x="434.5" y="394.9" font-size="18.5" fill="#999" text-anchor="end" font-weight="normal" >−16</text>
<rect x="435.5" y="437.2" width="14" height="2" fill="#8a8a8a"/>
<text x="434.5" y="445.1" font-size="18.5" fill="#999" text-anchor="end" font-weight="normal" >−19</text>
<rect x="435.5" y="490.8" width="14" height="2" fill="#8a8a8a"/>
<text x="434.5" y="498.7" font-size="18.5" fill="#999" text-anchor="end" font-weight="normal" >−22</text>
<rect x="435.5" y="512.0" width="14" height="2" fill="#fdb92e"/>
<text x="434.5" y="519.9" font-size="18.5" fill="#fdb92e" text-anchor="end" font-weight="normal" >−23</text>
<rect x="435.5" y="554.3" width="14" height="2" fill="#8a8a8a"/>
<text x="434.5" y="562.2" font-size="18.5" fill="#999" text-anchor="end" font-weight="normal" >−25</text>
<rect x="435.5" y="617.4" width="14" height="2" fill="#8a8a8a"/>
<text x="434.5" y="625.3" font-size="18.5" fill="#999" text-anchor="end" font-weight="normal" >−30</text>
<rect x="435.5" y="679.0" width="14" height="2" fill="#8a8a8a"/>
<text x="434.5" y="686.9" font-size="18.5" fill="#999" text-anchor="end" font-weight="normal" >−36</text>
<rect x="515" y="94" width="28" height="586" fill="#151515"/>
<rect x="515" y="137.4" width="28" height="55" fill="#5b9bd9" stroke="#13284a" stroke-width="1"/>
<path d="M1669.14 18.65 A13.3 13.3 0 1 1 1657.06 18.65" fill="none" stroke="#fdbc38" stroke-width="2.6"/>
<rect x="1660.85" y="14.90" width="4.5" height="13.8" fill="#fdbc38"/>
<rect x="705" y="54.3" width="412" height="199" rx="3" fill="url(#gvub)"/>
<path d="M752.54 170.53 A222.2 222.2 0 0 1 971.80 112.20" fill="none" stroke="#111" stroke-width="1.5"/>
<path d="M971.94 111.71 A222.7 222.7 0 0 1 1072.84 172.70" fill="none" stroke="#d4213a" stroke-width="4.8"/>
<path d="M1066.67 169.82 L1077.03 159.40 L1081.90 164.39 L1071.23 174.49Z" fill="#d4213a"/>
<path d="M752.90 170.88 L745.76 163.89" stroke="#111" stroke-width="2.0"/>
<path d="M773.44 152.38 L766.60 143.76" stroke="#111" stroke-width="2.4"/>
<path d="M794.90 137.31 L789.13 127.95" stroke="#111" stroke-width="2.4"/>
<path d="M817.01 125.35 L812.54 115.85" stroke="#111" stroke-width="1.7"/>
<path d="M840.62 115.87 L837.12 105.44" stroke="#111" stroke-width="2.4"/>
<path d="M865.21 109.14 L863.02 98.87" stroke="#111" stroke-width="1.7"/>
<path d="M886.28 105.72 L885.04 94.79" stroke="#111" stroke-width="1.9"/>
<path d="M911.61 104.30 L911.62 93.30" stroke="#111" stroke-width="1.9"/>
<path d="M942.15 106.46 L943.69 95.56" stroke="#111" stroke-width="1.9"/>
<path d="M971.80 112.20 L975.15 100.36" stroke="#d4213a" stroke-width="1.9"/>
<path d="M1009.40 126.63 L1014.83 115.59" stroke="#d4213a" stroke-width="1.9"/>
<path d="M1047.49 150.43 L1055.03 140.71" stroke="#d4213a" stroke-width="1.9"/>
<text x="729.8" y="163.0" font-size="18.4" fill="#111" text-anchor="middle" font-weight="normal" letter-spacing="1.2">-20</text>
<text x="756.3" y="140.7" font-size="18.4" fill="#111" text-anchor="middle" font-weight="normal" letter-spacing="1.2">-10</text>
<text x="784.5" y="123.3" font-size="18.4" fill="#111" text-anchor="middle" font-weight="normal" letter-spacing="1.2">-7</text>
<text x="832.2" y="100.9" font-size="18.4" fill="#111" text-anchor="middle" font-weight="normal" letter-spacing="1.2">-5</text>
<text x="879.3" y="90.7" font-size="18.4" fill="#111" text-anchor="middle" font-weight="normal" letter-spacing="1.2">-3</text>
<text x="908.5" y="89.2" font-size="18.4" fill="#111" text-anchor="middle" font-weight="normal" letter-spacing="1.2">-2</text>
<text x="940.4" y="91.0" font-size="18.4" fill="#111" text-anchor="middle" font-weight="normal" letter-spacing="1.2">-1</text>
<text x="977.4" y="96.9" font-size="18.4" fill="#111" text-anchor="middle" font-weight="normal" letter-spacing="1.2">0</text>
<text x="1015.4" y="112.7" font-size="18.4" fill="#111" text-anchor="middle" font-weight="normal" letter-spacing="1.2">1</text>
<text x="1059.1" y="136.3" font-size="18.4" fill="#111" text-anchor="middle" font-weight="normal" letter-spacing="1.2">2</text>
<text x="1088.1" y="160.8" font-size="18.4" fill="#111" text-anchor="middle" font-weight="normal" letter-spacing="1.2">3</text>
<text x="751.9" y="185.4" font-size="14.5" fill="#111" text-anchor="middle" font-weight="normal" letter-spacing="0.3">0</text>
<text x="771.3" y="172.7" font-size="14.5" fill="#111" text-anchor="middle" font-weight="normal" letter-spacing="0.3">20</text>
<text x="792.0" y="155.6" font-size="14.5" fill="#111" text-anchor="middle" font-weight="normal" letter-spacing="0.3">40</text>
<text x="844.6" y="129.1" font-size="14.5" fill="#111" text-anchor="middle" font-weight="normal" letter-spacing="0.3">60</text>
<text x="911.2" y="121.2" font-size="14.5" fill="#111" text-anchor="middle" font-weight="normal" letter-spacing="0.3">80</text>
<text x="965.2" y="129.3" font-size="14.5" fill="#111" text-anchor="middle" font-weight="normal" letter-spacing="0.3">100</text>
<text x="911.8" y="186.9" font-size="29" fill="#0a0a0a" text-anchor="middle" font-weight="bold" >L</text>
<g clip-path="url(#cv705_54)">
<path d="M1040.06 139.53 L1044.94 142.67 L967.52 260.59 L964.83 258.86Z" fill="#5a4e30" fill-opacity="0.33"/>
<path d="M1039.74 150.27 L962.69 259.54" stroke="#2a2210" stroke-opacity="0.52" stroke-width="1.7"/>
<path d="M1045.50 142.10 L1039.74 150.27" stroke="#2a2210" stroke-opacity="0.25" stroke-width="1.7"/>
</g>
<rect x="1141" y="54.3" width="412" height="199" rx="3" fill="url(#gvub)"/>
<path d="M1188.54 170.53 A222.2 222.2 0 0 1 1407.80 112.20" fill="none" stroke="#111" stroke-width="1.5"/>
<path d="M1407.94 111.71 A222.7 222.7 0 0 1 1508.84 172.70" fill="none" stroke="#d4213a" stroke-width="4.8"/>
<path d="M1502.67 169.82 L1513.03 159.40 L1517.90 164.39 L1507.23 174.49Z" fill="#d4213a"/>
<path d="M1188.90 170.88 L1181.76 163.89" stroke="#111" stroke-width="2.0"/>
<path d="M1209.44 152.38 L1202.60 143.76" stroke="#111" stroke-width="2.4"/>
<path d="M1230.90 137.31 L1225.13 127.95" stroke="#111" stroke-width="2.4"/>
<path d="M1253.01 125.35 L1248.54 115.85" stroke="#111" stroke-width="1.7"/>
<path d="M1276.62 115.87 L1273.12 105.44" stroke="#111" stroke-width="2.4"/>
<path d="M1301.21 109.14 L1299.02 98.87" stroke="#111" stroke-width="1.7"/>
<path d="M1322.28 105.72 L1321.04 94.79" stroke="#111" stroke-width="1.9"/>
<path d="M1347.61 104.30 L1347.62 93.30" stroke="#111" stroke-width="1.9"/>
<path d="M1378.15 106.46 L1379.69 95.56" stroke="#111" stroke-width="1.9"/>
<path d="M1407.80 112.20 L1411.15 100.36" stroke="#d4213a" stroke-width="1.9"/>
<path d="M1445.40 126.63 L1450.83 115.59" stroke="#d4213a" stroke-width="1.9"/>
<path d="M1483.49 150.43 L1491.03 140.71" stroke="#d4213a" stroke-width="1.9"/>
<text x="1165.8" y="163.0" font-size="18.4" fill="#111" text-anchor="middle" font-weight="normal" letter-spacing="1.2">-20</text>
<text x="1192.3" y="140.7" font-size="18.4" fill="#111" text-anchor="middle" font-weight="normal" letter-spacing="1.2">-10</text>
<text x="1220.5" y="123.3" font-size="18.4" fill="#111" text-anchor="middle" font-weight="normal" letter-spacing="1.2">-7</text>
<text x="1268.2" y="100.9" font-size="18.4" fill="#111" text-anchor="middle" font-weight="normal" letter-spacing="1.2">-5</text>
<text x="1315.3" y="90.7" font-size="18.4" fill="#111" text-anchor="middle" font-weight="normal" letter-spacing="1.2">-3</text>
<text x="1344.5" y="89.2" font-size="18.4" fill="#111" text-anchor="middle" font-weight="normal" letter-spacing="1.2">-2</text>
<text x="1376.4" y="91.0" font-size="18.4" fill="#111" text-anchor="middle" font-weight="normal" letter-spacing="1.2">-1</text>
<text x="1413.4" y="96.9" font-size="18.4" fill="#111" text-anchor="middle" font-weight="normal" letter-spacing="1.2">0</text>
<text x="1451.4" y="112.7" font-size="18.4" fill="#111" text-anchor="middle" font-weight="normal" letter-spacing="1.2">1</text>
<text x="1495.1" y="136.3" font-size="18.4" fill="#111" text-anchor="middle" font-weight="normal" letter-spacing="1.2">2</text>
<text x="1524.1" y="160.8" font-size="18.4" fill="#111" text-anchor="middle" font-weight="normal" letter-spacing="1.2">3</text>
<text x="1187.9" y="185.4" font-size="14.5" fill="#111" text-anchor="middle" font-weight="normal" letter-spacing="0.3">0</text>
<text x="1207.3" y="172.7" font-size="14.5" fill="#111" text-anchor="middle" font-weight="normal" letter-spacing="0.3">20</text>
<text x="1228.0" y="155.6" font-size="14.5" fill="#111" text-anchor="middle" font-weight="normal" letter-spacing="0.3">40</text>
<text x="1280.6" y="129.1" font-size="14.5" fill="#111" text-anchor="middle" font-weight="normal" letter-spacing="0.3">60</text>
<text x="1347.2" y="121.2" font-size="14.5" fill="#111" text-anchor="middle" font-weight="normal" letter-spacing="0.3">80</text>
<text x="1401.2" y="129.3" font-size="14.5" fill="#111" text-anchor="middle" font-weight="normal" letter-spacing="0.3">100</text>
<text x="1347.8" y="186.9" font-size="29" fill="#0a0a0a" text-anchor="middle" font-weight="bold" >R</text>
<g clip-path="url(#cv1141_54)">
<path d="M1476.06 139.53 L1480.94 142.67 L1403.52 260.59 L1400.83 258.86Z" fill="#5a4e30" fill-opacity="0.33"/>
<path d="M1475.74 150.27 L1398.69 259.54" stroke="#2a2210" stroke-opacity="0.52" stroke-width="1.7"/>
<path d="M1481.50 142.10 L1475.74 150.27" stroke="#2a2210" stroke-opacity="0.25" stroke-width="1.7"/>
</g>
<rect x="705" y="278.3" width="412" height="199" rx="3" fill="url(#gvub)"/>
<path d="M752.54 394.53 A222.2 222.2 0 0 1 971.80 336.20" fill="none" stroke="#111" stroke-width="1.5"/>
<path d="M971.94 335.71 A222.7 222.7 0 0 1 1072.84 396.70" fill="none" stroke="#d4213a" stroke-width="4.8"/>
<path d="M1066.67 393.82 L1077.03 383.40 L1081.90 388.39 L1071.23 398.49Z" fill="#d4213a"/>
<path d="M752.90 394.88 L745.76 387.89" stroke="#111" stroke-width="2.0"/>
<path d="M773.44 376.38 L766.60 367.76" stroke="#111" stroke-width="2.4"/>
<path d="M794.90 361.31 L789.13 351.95" stroke="#111" stroke-width="2.4"/>
<path d="M817.01 349.35 L812.54 339.85" stroke="#111" stroke-width="1.7"/>
<path d="M840.62 339.87 L837.12 329.44" stroke="#111" stroke-width="2.4"/>
<path d="M865.21 333.14 L863.02 322.87" stroke="#111" stroke-width="1.7"/>
<path d="M886.28 329.72 L885.04 318.79" stroke="#111" stroke-width="1.9"/>
<path d="M911.61 328.30 L911.62 317.30" stroke="#111" stroke-width="1.9"/>
<path d="M942.15 330.46 L943.69 319.56" stroke="#111" stroke-width="1.9"/>
<path d="M971.80 336.20 L975.15 324.36" stroke="#d4213a" stroke-width="1.9"/>
<path d="M1009.40 350.63 L1014.83 339.59" stroke="#d4213a" stroke-width="1.9"/>
<path d="M1047.49 374.43 L1055.03 364.71" stroke="#d4213a" stroke-width="1.9"/>
<text x="729.8" y="387.0" font-size="18.4" fill="#111" text-anchor="middle" font-weight="normal" letter-spacing="1.2">-20</text>
<text x="756.3" y="364.7" font-size="18.4" fill="#111" text-anchor="middle" font-weight="normal" letter-spacing="1.2">-10</text>
<text x="784.5" y="347.3" font-size="18.4" fill="#111" text-anchor="middle" font-weight="normal" letter-spacing="1.2">-7</text>
<text x="832.2" y="324.9" font-size="18.4" fill="#111" text-anchor="middle" font-weight="normal" letter-spacing="1.2">-5</text>
<text x="879.3" y="314.7" font-size="18.4" fill="#111" text-anchor="middle" font-weight="normal" letter-spacing="1.2">-3</text>
<text x="908.5" y="313.2" font-size="18.4" fill="#111" text-anchor="middle" font-weight="normal" letter-spacing="1.2">-2</text>
<text x="940.4" y="315.0" font-size="18.4" fill="#111" text-anchor="middle" font-weight="normal" letter-spacing="1.2">-1</text>
<text x="977.4" y="320.9" font-size="18.4" fill="#111" text-anchor="middle" font-weight="normal" letter-spacing="1.2">0</text>
<text x="1015.4" y="336.7" font-size="18.4" fill="#111" text-anchor="middle" font-weight="normal" letter-spacing="1.2">1</text>
<text x="1059.1" y="360.3" font-size="18.4" fill="#111" text-anchor="middle" font-weight="normal" letter-spacing="1.2">2</text>
<text x="1088.1" y="384.8" font-size="18.4" fill="#111" text-anchor="middle" font-weight="normal" letter-spacing="1.2">3</text>
<text x="751.9" y="409.4" font-size="14.5" fill="#111" text-anchor="middle" font-weight="normal" letter-spacing="0.3">0</text>
<text x="771.3" y="396.7" font-size="14.5" fill="#111" text-anchor="middle" font-weight="normal" letter-spacing="0.3">20</text>
<text x="792.0" y="379.6" font-size="14.5" fill="#111" text-anchor="middle" font-weight="normal" letter-spacing="0.3">40</text>
<text x="844.6" y="353.1" font-size="14.5" fill="#111" text-anchor="middle" font-weight="normal" letter-spacing="0.3">60</text>
<text x="911.2" y="345.2" font-size="14.5" fill="#111" text-anchor="middle" font-weight="normal" letter-spacing="0.3">80</text>
<text x="965.2" y="353.3" font-size="14.5" fill="#111" text-anchor="middle" font-weight="normal" letter-spacing="0.3">100</text>
<text x="911.8" y="410.9" font-size="29" fill="#0a0a0a" text-anchor="middle" font-weight="bold" textLength="18" lengthAdjust="spacingAndGlyphs">M</text>
<g clip-path="url(#cv705_278)">
<path d="M1040.06 363.53 L1044.94 366.67 L967.52 484.59 L964.83 482.86Z" fill="#5a4e30" fill-opacity="0.33"/>
<path d="M1039.74 374.27 L962.69 483.54" stroke="#2a2210" stroke-opacity="0.52" stroke-width="1.7"/>
<path d="M1045.50 366.10 L1039.74 374.27" stroke="#2a2210" stroke-opacity="0.25" stroke-width="1.7"/>
</g>
<rect x="1141" y="278.3" width="412" height="199" rx="3" fill="url(#gvub)"/>
<path d="M1188.54 394.53 A222.2 222.2 0 0 1 1407.80 336.20" fill="none" stroke="#111" stroke-width="1.5"/>
<path d="M1407.94 335.71 A222.7 222.7 0 0 1 1508.84 396.70" fill="none" stroke="#d4213a" stroke-width="4.8"/>
<path d="M1502.67 393.82 L1513.03 383.40 L1517.90 388.39 L1507.23 398.49Z" fill="#d4213a"/>
<path d="M1188.90 394.88 L1181.76 387.89" stroke="#111" stroke-width="2.0"/>
<path d="M1209.44 376.38 L1202.60 367.76" stroke="#111" stroke-width="2.4"/>
<path d="M1230.90 361.31 L1225.13 351.95" stroke="#111" stroke-width="2.4"/>
<path d="M1253.01 349.35 L1248.54 339.85" stroke="#111" stroke-width="1.7"/>
<path d="M1276.62 339.87 L1273.12 329.44" stroke="#111" stroke-width="2.4"/>
<path d="M1301.21 333.14 L1299.02 322.87" stroke="#111" stroke-width="1.7"/>
<path d="M1322.28 329.72 L1321.04 318.79" stroke="#111" stroke-width="1.9"/>
<path d="M1347.61 328.30 L1347.62 317.30" stroke="#111" stroke-width="1.9"/>
<path d="M1378.15 330.46 L1379.69 319.56" stroke="#111" stroke-width="1.9"/>
<path d="M1407.80 336.20 L1411.15 324.36" stroke="#d4213a" stroke-width="1.9"/>
<path d="M1445.40 350.63 L1450.83 339.59" stroke="#d4213a" stroke-width="1.9"/>
<path d="M1483.49 374.43 L1491.03 364.71" stroke="#d4213a" stroke-width="1.9"/>
<text x="1165.8" y="387.0" font-size="18.4" fill="#111" text-anchor="middle" font-weight="normal" letter-spacing="1.2">-20</text>
<text x="1192.3" y="364.7" font-size="18.4" fill="#111" text-anchor="middle" font-weight="normal" letter-spacing="1.2">-10</text>
<text x="1220.5" y="347.3" font-size="18.4" fill="#111" text-anchor="middle" font-weight="normal" letter-spacing="1.2">-7</text>
<text x="1268.2" y="324.9" font-size="18.4" fill="#111" text-anchor="middle" font-weight="normal" letter-spacing="1.2">-5</text>
<text x="1315.3" y="314.7" font-size="18.4" fill="#111" text-anchor="middle" font-weight="normal" letter-spacing="1.2">-3</text>
<text x="1344.5" y="313.2" font-size="18.4" fill="#111" text-anchor="middle" font-weight="normal" letter-spacing="1.2">-2</text>
<text x="1376.4" y="315.0" font-size="18.4" fill="#111" text-anchor="middle" font-weight="normal" letter-spacing="1.2">-1</text>
<text x="1413.4" y="320.9" font-size="18.4" fill="#111" text-anchor="middle" font-weight="normal" letter-spacing="1.2">0</text>
<text x="1451.4" y="336.7" font-size="18.4" fill="#111" text-anchor="middle" font-weight="normal" letter-spacing="1.2">1</text>
<text x="1495.1" y="360.3" font-size="18.4" fill="#111" text-anchor="middle" font-weight="normal" letter-spacing="1.2">2</text>
<text x="1524.1" y="384.8" font-size="18.4" fill="#111" text-anchor="middle" font-weight="normal" letter-spacing="1.2">3</text>
<text x="1187.9" y="409.4" font-size="14.5" fill="#111" text-anchor="middle" font-weight="normal" letter-spacing="0.3">0</text>
<text x="1207.3" y="396.7" font-size="14.5" fill="#111" text-anchor="middle" font-weight="normal" letter-spacing="0.3">20</text>
<text x="1228.0" y="379.6" font-size="14.5" fill="#111" text-anchor="middle" font-weight="normal" letter-spacing="0.3">40</text>
<text x="1280.6" y="353.1" font-size="14.5" fill="#111" text-anchor="middle" font-weight="normal" letter-spacing="0.3">60</text>
<text x="1347.2" y="345.2" font-size="14.5" fill="#111" text-anchor="middle" font-weight="normal" letter-spacing="0.3">80</text>
<text x="1401.2" y="353.3" font-size="14.5" fill="#111" text-anchor="middle" font-weight="normal" letter-spacing="0.3">100</text>
<text x="1347.8" y="410.9" font-size="29" fill="#0a0a0a" text-anchor="middle" font-weight="bold" >S</text>
<g clip-path="url(#cv1141_278)">
<path d="M1214.34 362.73 L1219.26 359.67 L1294.79 483.24 L1292.08 484.93Z" fill="#5a4e30" fill-opacity="0.33"/>
<path d="M1226.81 374.48 L1295.45 484.08" stroke="#2a2210" stroke-opacity="0.52" stroke-width="1.7"/>
<path d="M1221.50 366.00 L1226.81 374.48" stroke="#2a2210" stroke-opacity="0.25" stroke-width="1.7"/>
</g>
<rect x="1580.5" y="157.7" width="80" height="58" fill="#0e0e0e"/>
<rect x="1578.5" y="155.7" width="80" height="58" fill="#fdb92c"/>
<text x="1619.0" y="192.8" font-size="21" fill="#2e2a22" text-anchor="middle" font-weight="normal" stroke="#fdb92c" stroke-width="0.3" paint-order="fill stroke">VU</text>
<rect x="1580.5" y="280.5" width="80" height="58" fill="#161616"/>
<rect x="1578.5" y="278.5" width="80" height="57.6" fill="#444"/>
<text x="1619.0" y="314.6" font-size="21" fill="#7e7e7e" text-anchor="middle" font-weight="normal" stroke="#444" stroke-width="0.3" paint-order="fill stroke">PPM</text>
<g transform="translate(1619.5 238.5) scale(0.84 1)">
<text x="0.0" y="0.0" font-size="17.5" fill="#959595" text-anchor="middle" font-weight="normal" stroke="#353535" stroke-width="0.4" paint-order="fill stroke">-10 dBFS</text>
</g>
<g transform="translate(1619.5 360) scale(0.84 1)">
<text x="0.0" y="0.0" font-size="17.5" fill="#959595" text-anchor="middle" font-weight="normal" stroke="#353535" stroke-width="0.4" paint-order="fill stroke">-12 dBFS</text>
</g>
<path d="M639.82 541.34 L643.08 542.50 L642.43 544.93 L639.03 544.30 L637.68 546.62 L639.93 549.26 L638.16 551.03 L635.52 548.78 L633.20 550.13 L633.83 553.53 L631.40 554.18 L630.24 550.92 L627.56 550.92 L626.40 554.18 L623.97 553.53 L624.60 550.13 L622.28 548.78 L619.64 551.03 L617.87 549.26 L620.12 546.62 L618.77 544.30 L615.37 544.93 L614.72 542.50 L617.98 541.34 L617.98 538.66 L614.72 537.50 L615.37 535.07 L618.77 535.70 L620.12 533.38 L617.87 530.74 L619.64 528.97 L622.28 531.22 L624.60 529.87 L623.97 526.47 L626.40 525.82 L627.56 529.08 L630.24 529.08 L631.40 525.82 L633.83 526.47 L633.20 529.87 L635.52 531.22 L638.16 528.97 L639.93 530.74 L637.68 533.38 L639.03 535.70 L642.43 535.07 L643.08 537.50 L639.82 538.66Z M636.50 540.00 A7.6 7.6 0 1 0 621.30 540.00 A7.6 7.6 0 1 0 636.50 540.00Z" fill="#8e8e90" fill-rule="evenodd" stroke="#8e8e90" stroke-width="0.8" stroke-linejoin="round"/>
<path d="M1669.14 530.75 A13.3 13.3 0 1 1 1657.06 530.75" fill="none" stroke="#fdbc38" stroke-width="2.6"/>
<rect x="1660.85" y="527.00" width="4.5" height="13.8" fill="#fdbc38"/>
<g fill="#4e4e4e"><rect x="704.3" y="575.5" width="2" height="277.3"/><rect x="746.5" y="575.5" width="2" height="277.3"/><rect x="779.3" y="575.5" width="2" height="277.3"/><rect x="806.1" y="575.5" width="2" height="277.3"/><rect x="828.8" y="575.5" width="2" height="277.3"/><rect x="848.4" y="575.5" width="2" height="277.3"/><rect x="865.7" y="575.5" width="2" height="277.3"/><rect x="881.2" y="575.5" width="2" height="277.3"/><rect x="983.0" y="575.5" width="2" height="277.3"/><rect x="1042.6" y="575.5" width="2" height="277.3"/><rect x="1084.8" y="575.5" width="2" height="277.3"/><rect x="1117.6" y="575.5" width="2" height="277.3"/><rect x="1144.4" y="575.5" width="2" height="277.3"/><rect x="1167.1" y="575.5" width="2" height="277.3"/><rect x="1186.7" y="575.5" width="2" height="277.3"/><rect x="1204.0" y="575.5" width="2" height="277.3"/><rect x="1219.5" y="575.5" width="2" height="277.3"/><rect x="1321.3" y="575.5" width="2" height="277.3"/><rect x="1380.9" y="575.5" width="2" height="277.3"/><rect x="1423.1" y="575.5" width="2" height="277.3"/><rect x="1455.9" y="575.5" width="2" height="277.3"/><rect x="1482.7" y="575.5" width="2" height="277.3"/><rect x="1505.4" y="575.5" width="2" height="277.3"/><rect x="1525.0" y="575.5" width="2" height="277.3"/><rect x="1542.3" y="575.5" width="2" height="277.3"/><rect x="1557.8" y="575.5" width="2" height="277.3"/><rect x="1584.5" y="575.5" width="2" height="277.3"/><rect x="1617.3" y="575.5" width="2" height="277.3"/><rect x="645.7" y="574.3" width="1014.9" height="2"/><rect x="645.7" y="603.7" width="1014.9" height="2"/><rect x="645.7" y="632.4" width="1014.9" height="2"/><rect x="645.7" y="658.2" width="1014.9" height="2"/><rect x="645.7" y="686.2" width="1014.9" height="2"/><rect x="645.7" y="714.2" width="1014.9" height="2"/><rect x="645.7" y="742.0" width="1014.9" height="2"/><rect x="645.7" y="770.2" width="1014.9" height="2"/><rect x="645.7" y="796.0" width="1014.9" height="2"/><rect x="645.7" y="824.0" width="1014.9" height="2"/><rect x="645.7" y="589.6" width="20" height="2"/><rect x="1639.6" y="589.6" width="21" height="2"/><rect x="645.7" y="617.8" width="20" height="2"/><rect x="1639.6" y="617.8" width="21" height="2"/><rect x="645.7" y="646.0" width="20" height="2"/><rect x="1639.6" y="646.0" width="21" height="2"/><rect x="645.7" y="671.9" width="20" height="2"/><rect x="1639.6" y="671.9" width="21" height="2"/><rect x="645.7" y="700.1" width="20" height="2"/><rect x="1639.6" y="700.1" width="21" height="2"/><rect x="645.7" y="727.8" width="20" height="2"/><rect x="1639.6" y="727.8" width="21" height="2"/><rect x="645.7" y="756.1" width="20" height="2"/><rect x="1639.6" y="756.1" width="21" height="2"/><rect x="645.7" y="784.0" width="20" height="2"/><rect x="1639.6" y="784.0" width="21" height="2"/><rect x="645.7" y="810.2" width="20" height="2"/><rect x="1639.6" y="810.2" width="21" height="2"/><rect x="645.7" y="838.1" width="20" height="2"/><rect x="1639.6" y="838.1" width="21" height="2"/></g>
<g fill="#fdb92e" stroke="#7a5c1a" stroke-width="1"><rect x="649.90" y="838.7" width="15.96" height="13.6"/><rect x="683.83" y="819.9" width="15.96" height="32.4"/><rect x="700.79" y="782.7" width="15.96" height="69.6"/><rect x="717.76" y="725.8" width="15.96" height="126.5"/><rect x="734.73" y="655.0" width="15.96" height="197.3"/><rect x="751.69" y="614.8" width="15.96" height="237.5"/><rect x="768.65" y="648.0" width="15.96" height="204.3"/><rect x="785.62" y="643.3" width="15.96" height="209.0"/><rect x="802.59" y="663.5" width="15.96" height="188.8"/><rect x="819.55" y="678.1" width="15.96" height="174.2"/><rect x="836.51" y="670.1" width="15.96" height="182.2"/><rect x="853.48" y="681.1" width="15.96" height="171.2"/><rect x="870.44" y="730.0" width="15.96" height="122.3"/><rect x="887.41" y="724.6" width="15.96" height="127.7"/><rect x="904.38" y="709.8" width="15.96" height="142.5"/><rect x="921.34" y="726.8" width="15.96" height="125.5"/><rect x="938.30" y="698.8" width="15.96" height="153.5"/><rect x="955.27" y="677.8" width="15.96" height="174.5"/><rect x="972.23" y="696.7" width="15.96" height="155.6"/><rect x="989.20" y="705.6" width="15.96" height="146.7"/><rect x="1006.16" y="704.4" width="15.96" height="147.9"/><rect x="1023.13" y="729.3" width="15.96" height="123.0"/><rect x="1040.10" y="722.3" width="15.96" height="130.0"/><rect x="1057.06" y="696.9" width="15.96" height="155.4"/><rect x="1074.03" y="654.6" width="15.96" height="197.7"/><rect x="1090.99" y="721.1" width="15.96" height="131.2"/><rect x="1107.95" y="681.6" width="15.96" height="170.7"/><rect x="1124.92" y="694.8" width="15.96" height="157.5"/><rect x="1141.88" y="733.8" width="15.96" height="118.5"/><rect x="1158.85" y="750.3" width="15.96" height="102.0"/><rect x="1175.82" y="737.3" width="15.96" height="115.0"/><rect x="1192.78" y="739.2" width="15.96" height="113.1"/><rect x="1209.74" y="730.3" width="15.96" height="122.0"/><rect x="1226.71" y="713.1" width="15.96" height="139.2"/><rect x="1243.67" y="704.9" width="15.96" height="147.4"/><rect x="1260.64" y="707.7" width="15.96" height="144.6"/><rect x="1277.61" y="670.1" width="15.96" height="182.2"/><rect x="1294.57" y="725.6" width="15.96" height="126.7"/><rect x="1311.53" y="713.8" width="15.96" height="138.5"/><rect x="1328.50" y="723.5" width="15.96" height="128.8"/><rect x="1345.46" y="709.8" width="15.96" height="142.5"/><rect x="1362.43" y="730.8" width="15.96" height="121.5"/><rect x="1379.39" y="736.4" width="15.96" height="115.9"/><rect x="1396.36" y="711.7" width="15.96" height="140.6"/><rect x="1413.32" y="708.9" width="15.96" height="143.4"/><rect x="1430.29" y="725.3" width="15.96" height="127.0"/><rect x="1447.26" y="713.4" width="15.96" height="138.9"/><rect x="1464.22" y="680.4" width="15.96" height="171.9"/><rect x="1481.18" y="695.2" width="15.96" height="157.1"/><rect x="1498.15" y="690.1" width="15.96" height="162.2"/><rect x="1515.12" y="716.2" width="15.96" height="136.1"/><rect x="1532.08" y="724.6" width="15.96" height="127.7"/><rect x="1549.05" y="725.6" width="15.96" height="126.7"/><rect x="1566.01" y="718.5" width="15.96" height="133.8"/><rect x="1582.97" y="716.4" width="15.96" height="135.9"/><rect x="1599.94" y="732.9" width="15.96" height="119.4"/><rect x="1616.90" y="740.2" width="15.96" height="112.1"/><rect x="1633.87" y="751.9" width="15.96" height="100.4"/><rect x="1650.84" y="787.0" width="7.76" height="65.3"/></g>
<g fill="#7a5c1a" fill-opacity="0.85" clip-path="url(#cbars)"><rect x="645.7" y="603.7" width="1014.9" height="2"/><rect x="645.7" y="632.4" width="1014.9" height="2"/><rect x="645.7" y="658.2" width="1014.9" height="2"/><rect x="645.7" y="686.2" width="1014.9" height="2"/><rect x="645.7" y="714.2" width="1014.9" height="2"/><rect x="645.7" y="742.0" width="1014.9" height="2"/><rect x="645.7" y="770.2" width="1014.9" height="2"/><rect x="645.7" y="796.0" width="1014.9" height="2"/><rect x="645.7" y="824.0" width="1014.9" height="2"/></g>
<rect x="644.7" y="574.5" width="2" height="279.3" fill="#555"/>
<rect x="1659.6" y="574.5" width="2" height="279.3" fill="#555"/>
<rect x="644.7" y="851.8" width="1016.9" height="2" fill="#555"/>
<rect x="644.7" y="574.5" width="1016.9" height="2" fill="#555"/>
<text x="640.5" y="581.5" font-size="17" fill="#a6a6a6" text-anchor="end" font-weight="bold" letter-spacing="0.45">0</text>
<text x="640.5" y="610.9" font-size="17" fill="#a6a6a6" text-anchor="end" font-weight="bold" letter-spacing="0.45">−5</text>
<text x="640.5" y="639.6" font-size="17" fill="#a6a6a6" text-anchor="end" font-weight="bold" letter-spacing="0.45">−10</text>
<text x="640.5" y="665.4" font-size="17" fill="#a6a6a6" text-anchor="end" font-weight="bold" letter-spacing="0.45">−15</text>
<text x="640.5" y="693.4" font-size="17" fill="#a6a6a6" text-anchor="end" font-weight="bold" letter-spacing="0.45">−20</text>
<text x="640.5" y="721.4" font-size="17" fill="#a6a6a6" text-anchor="end" font-weight="bold" letter-spacing="0.45">−25</text>
<text x="640.5" y="749.2" font-size="17" fill="#a6a6a6" text-anchor="end" font-weight="bold" letter-spacing="0.45">−30</text>
<text x="640.5" y="777.4" font-size="17" fill="#a6a6a6" text-anchor="end" font-weight="bold" letter-spacing="0.45">−35</text>
<text x="640.5" y="803.2" font-size="17" fill="#a6a6a6" text-anchor="end" font-weight="bold" letter-spacing="0.45">−40</text>
<text x="640.5" y="831.2" font-size="17" fill="#a6a6a6" text-anchor="end" font-weight="bold" letter-spacing="0.45">−45</text>
<text x="645.0" y="870.6" font-size="17" fill="#a6a6a6" text-anchor="middle" font-weight="bold" letter-spacing="0.45">20</text>
<text x="703.0" y="870.6" font-size="17" fill="#a6a6a6" text-anchor="middle" font-weight="bold" letter-spacing="0.45">30</text>
<text x="779.0" y="870.6" font-size="17" fill="#a6a6a6" text-anchor="middle" font-weight="bold" letter-spacing="0.45">50</text>
<text x="827.0" y="870.6" font-size="17" fill="#a6a6a6" text-anchor="middle" font-weight="bold" letter-spacing="0.45">70</text>
<text x="881.0" y="870.6" font-size="17" fill="#a6a6a6" text-anchor="middle" font-weight="bold" letter-spacing="0.45">100</text>
<text x="983.0" y="870.6" font-size="17" fill="#a6a6a6" text-anchor="middle" font-weight="bold" letter-spacing="0.45">200</text>
<text x="1041.0" y="870.6" font-size="17" fill="#a6a6a6" text-anchor="middle" font-weight="bold" letter-spacing="0.45">300</text>
<text x="1117.0" y="870.6" font-size="17" fill="#a6a6a6" text-anchor="middle" font-weight="bold" letter-spacing="0.45">500</text>
<text x="1165.0" y="870.6" font-size="17" fill="#a6a6a6" text-anchor="middle" font-weight="bold" letter-spacing="0.45">700</text>
<text x="1219.0" y="870.6" font-size="17" fill="#a6a6a6" text-anchor="middle" font-weight="bold" letter-spacing="0.45">1k</text>
<text x="1321.0" y="870.6" font-size="17" fill="#a6a6a6" text-anchor="middle" font-weight="bold" letter-spacing="0.45">2k</text>
<text x="1379.0" y="870.6" font-size="17" fill="#a6a6a6" text-anchor="middle" font-weight="bold" letter-spacing="0.45">3k</text>
<text x="1455.0" y="870.6" font-size="17" fill="#a6a6a6" text-anchor="middle" font-weight="bold" letter-spacing="0.45">5k</text>
<text x="1503.0" y="870.6" font-size="17" fill="#a6a6a6" text-anchor="middle" font-weight="bold" letter-spacing="0.45">7k</text>
<text x="1557.0" y="870.6" font-size="17" fill="#a6a6a6" text-anchor="middle" font-weight="bold" letter-spacing="0.45">10k</text>
<text x="1659.0" y="870.6" font-size="17" fill="#a6a6a6" text-anchor="middle" font-weight="bold" letter-spacing="0.45">20k</text>
<path d="M67.72 811.34 L70.98 812.50 L70.33 814.93 L66.93 814.30 L65.58 816.62 L67.83 819.26 L66.06 821.03 L63.42 818.78 L61.10 820.13 L61.73 823.53 L59.30 824.18 L58.14 820.92 L55.46 820.92 L54.30 824.18 L51.87 823.53 L52.50 820.13 L50.18 818.78 L47.54 821.03 L45.77 819.26 L48.02 816.62 L46.67 814.30 L43.27 814.93 L42.62 812.50 L45.88 811.34 L45.88 808.66 L42.62 807.50 L43.27 805.07 L46.67 805.70 L48.02 803.38 L45.77 800.74 L47.54 798.97 L50.18 801.22 L52.50 799.87 L51.87 796.47 L54.30 795.82 L55.46 799.08 L58.14 799.08 L59.30 795.82 L61.73 796.47 L61.10 799.87 L63.42 801.22 L66.06 798.97 L67.83 800.74 L65.58 803.38 L66.93 805.70 L70.33 805.07 L70.98 807.50 L67.72 808.66Z M64.40 810.00 A7.6 7.6 0 1 0 49.20 810.00 A7.6 7.6 0 1 0 64.40 810.00Z" fill="#8e8e90" fill-rule="evenodd" stroke="#8e8e90" stroke-width="0.8" stroke-linejoin="round"/>
<path d="M557.14 800.35 A13.3 13.3 0 1 1 545.06 800.35" fill="none" stroke="#fdbc38" stroke-width="2.6"/>
<rect x="548.85" y="796.60" width="4.5" height="13.8" fill="#fdbc38"/>
<text x="78.0" y="874.4" font-size="20.5" fill="#888" text-anchor="start" font-weight="bold" >L</text>
<text x="507.0" y="876.0" font-size="20.5" fill="#888" text-anchor="start" font-weight="bold" >R</text>
<rect x="130.4" y="821.5999999999999" width="329.6" height="328.9" fill="#141414" stroke="#5a5a5a" stroke-width="3.6"/>
<path d="M132.2 986.0 L458.2 986.0 M132.2 986.0 L295.2 823.4 L458.2 986.0 L295.2 1148.7Z" fill="none" stroke="#3e3e3e" stroke-width="2.8"/>
<path d="M294.8 829.0 L290.8 836.8 L287.2 844.5 L283.8 852.2 L280.5 860.0 L277.4 867.8 L274.5 875.5 L271.7 883.2 L269.0 891.0 L266.6 898.8 L264.3 906.5 L262.2 914.2 L260.2 922.0 L258.5 929.8 L257.0 937.5 L255.8 945.2 L254.7 953.0 L253.9 960.8 L253.3 968.5 L252.9 976.2 L252.8 984.0 L252.9 991.8 L253.3 999.5 L253.9 1007.2 L254.7 1015.0 L255.8 1022.8 L257.0 1030.5 L258.5 1038.2 L260.2 1046.0 L262.2 1053.8 L264.3 1061.5 L266.6 1069.2 L269.0 1077.0 L271.7 1084.8 L274.5 1092.5 L277.4 1100.2 L280.5 1108.0 L283.8 1115.8 L287.2 1123.5 L290.8 1131.2 L294.8 1139.0 L294.8 1139.0 L298.8 1131.2 L302.4 1123.5 L305.8 1115.8 L309.1 1108.0 L312.2 1100.2 L315.1 1092.5 L317.9 1084.8 L320.6 1077.0 L323.0 1069.2 L325.3 1061.5 L327.4 1053.8 L329.4 1046.0 L331.1 1038.2 L332.6 1030.5 L333.8 1022.8 L334.9 1015.0 L335.7 1007.2 L336.3 999.5 L336.7 991.8 L336.8 984.0 L336.7 976.2 L336.3 968.5 L335.7 960.8 L334.9 953.0 L333.8 945.2 L332.6 937.5 L331.1 929.8 L329.4 922.0 L327.4 914.2 L325.3 906.5 L323.0 898.8 L320.6 891.0 L317.9 883.2 L315.1 875.5 L312.2 867.8 L309.1 860.0 L305.8 852.2 L302.4 844.5 L298.8 836.8 L294.8 829.0Z" fill="#000" filter="url(#speck)"/>
<path d="M139.7 1211.4 A36.35 35.7 0 0 1 212.4 1211.4 Z" fill="none" stroke="#9a9a9a" stroke-width="1.4"/>
<path d="M259.6 1211.4 A36.35 35.7 0 0 1 332.3 1211.4 Z" fill="none" stroke="#9a9a9a" stroke-width="1.4"/>
<path d="M172.1 1205.9h.9M172.3 1207.8h.9M167.0 1208.9h.9M182.3 1206.8h.9M181.8 1208.5h.9M177.0 1209.1h.9M161.5 1202.4h.9M177.8 1206.0h.9M161.3 1193.6h.9M167.3 1206.3h.9M176.3 1210.5h.9M177.9 1204.6h.9M176.3 1207.1h.9M169.0 1193.8h.9M178.2 1199.0h.9M169.3 1203.6h.9M171.4 1209.9h.9M178.7 1208.5h.9M170.6 1201.4h.9M170.1 1198.8h.9M167.9 1208.6h.9M177.2 1196.1h.9M174.4 1197.9h.9M158.9 1207.8h.9M173.2 1202.8h.9M177.7 1210.4h.9M163.0 1202.7h.9M179.0 1201.5h.9M184.8 1207.4h.9M174.9 1198.0h.9M178.6 1204.9h.9M170.6 1198.4h.9M166.7 1205.7h.9M183.7 1190.7h.9M163.1 1208.6h.9M184.8 1205.2h.9M176.7 1203.6h.9M165.6 1201.2h.9M182.3 1209.4h.9M175.8 1206.7h.9M186.0 1204.8h.9M177.9 1205.5h.9M162.2 1198.2h.9M181.2 1205.7h.9M159.2 1204.7h.9M180.3 1192.9h.9M172.6 1200.8h.9M164.2 1194.9h.9M178.1 1209.5h.9M176.4 1204.5h.9M174.9 1199.5h.9M169.0 1206.9h.9M181.8 1210.7h.9M167.4 1201.5h.9M185.0 1206.6h.9M163.7 1209.7h.9M172.9 1208.0h.9M184.5 1200.7h.9M183.5 1198.3h.9M168.1 1204.7h.9M182.5 1202.4h.9M176.6 1209.6h.9M175.1 1205.2h.9M172.7 1208.2h.9M178.3 1211.0h.9M179.7 1205.3h.9M189.1 1207.8h.9M170.8 1207.3h.9M173.9 1201.8h.9M171.5 1207.1h.9M165.6 1208.6h.9M177.0 1208.6h.9M170.8 1204.4h.9M176.1 1205.8h.9M169.8 1210.0h.9M172.3 1210.4h.9M181.6 1199.3h.9M173.5 1201.5h.9M180.4 1196.1h.9M161.2 1207.5h.9M171.4 1204.8h.9M182.2 1196.5h.9M179.1 1196.1h.9M175.3 1199.1h.9M172.9 1209.1h.9M180.0 1209.6h.9M173.3 1195.7h.9M181.9 1208.1h.9M180.9 1208.3h.9M175.0 1203.9h.9M175.7 1204.6h.9M162.5 1195.9h.9M178.6 1201.4h.9M166.3 1196.3h.9M183.5 1203.5h.9M185.0 1201.6h.9M174.0 1199.6h.9M179.7 1195.1h.9M167.3 1195.4h.9M181.4 1209.2h.9M159.2 1196.9h.9M173.3 1205.0h.9M177.0 1206.9h.9M185.2 1200.8h.9M182.5 1196.1h.9M184.9 1209.2h.9M168.4 1200.8h.9M174.9 1209.8h.9M184.7 1208.4h.9M160.1 1202.8h.9M176.4 1204.9h.9M173.9 1202.7h.9M174.6 1197.7h.9M173.5 1200.6h.9M185.2 1194.9h.9M169.0 1202.2h.9M159.9 1200.2h.9M159.3 1200.3h.9M164.8 1210.9h.9M172.6 1210.7h.9M169.6 1208.7h.9M187.4 1210.6h.9M178.0 1201.0h.9M172.5 1198.4h.9M169.8 1200.3h.9M161.7 1205.0h.9M181.6 1203.1h.9M174.1 1202.9h.9M175.2 1199.2h.9M162.3 1204.6h.9M180.9 1205.3h.9M167.2 1203.3h.9M162.5 1209.8h.9M165.2 1207.4h.9M169.2 1191.6h.9M179.4 1208.2h.9M176.2 1206.4h.9M179.8 1203.5h.9M179.0 1207.7h.9M184.0 1204.4h.9M177.4 1190.2h.9M180.7 1197.9h.9M171.8 1206.3h.9M188.6 1193.4h.9M177.5 1186.8h.9M167.0 1204.1h.9M188.1 1209.8h.9M178.2 1202.0h.9M167.2 1210.1h.9M176.2 1202.7h.9M173.7 1209.0h.9M166.4 1207.4h.9M180.7 1210.0h.9M167.6 1202.6h.9M178.8 1185.1h.9M178.7 1206.2h.9M186.6 1206.7h.9M173.5 1205.8h.9M159.4 1200.7h.9M176.4 1204.0h.9M183.9 1192.9h.9M163.5 1204.3h.9M176.2 1209.2h.9M171.0 1201.3h.9M189.9 1200.6h.9M165.0 1197.5h.9M186.8 1201.1h.9M187.7 1202.9h.9M167.5 1208.4h.9M173.6 1205.8h.9M168.5 1209.8h.9M177.4 1207.2h.9M178.8 1208.9h.9M171.6 1203.1h.9M174.4 1202.7h.9M169.3 1211.0h.9M173.2 1209.4h.9M174.0 1209.2h.9M173.0 1198.4h.9M177.2 1200.5h.9M177.3 1209.1h.9M177.3 1201.3h.9M159.8 1210.4h.9M167.0 1203.6h.9M165.9 1184.7h.9M166.2 1195.2h.9M171.1 1197.3h.9M168.3 1205.8h.9M177.7 1209.2h.9M185.1 1203.9h.9M173.8 1205.0h.9M186.4 1201.3h.9M181.7 1200.2h.9M172.9 1203.7h.9M171.8 1200.3h.9M178.5 1201.9h.9M172.4 1185.5h.9M183.3 1208.8h.9M174.7 1185.0h.9M171.4 1202.3h.9M181.4 1210.9h.9M165.2 1209.1h.9M176.7 1199.7h.9M179.9 1210.8h.9M180.4 1205.6h.9M175.5 1210.4h.9M172.2 1204.1h.9M166.1 1204.7h.9M174.0 1196.4h.9M170.7 1190.9h.9M168.9 1205.3h.9M178.2 1210.5h.9M172.3 1196.8h.9M187.7 1205.8h.9M182.2 1202.2h.9M172.6 1192.8h.9M179.9 1201.6h.9M159.8 1210.5h.9M178.7 1193.4h.9" stroke="#858585" stroke-width="0.9" fill="none"/>
<path d="M296.8 1210.0 Q291.5 1193.5 297.1 1177.0 Q302.3 1193.5 296.8 1210.0ZM296.8 1210.0 Q284.3 1201.1 278.4 1187.0 Q290.9 1195.9 296.8 1210.0ZM296.8 1210.0 Q290.5 1201.0 291.6 1190.2 Q297.9 1199.1 296.8 1210.0ZM296.8 1210.0 Q297.0 1201.9 303.6 1197.2 Q303.4 1205.3 296.8 1210.0ZM296.8 1210.0 Q288.0 1210.1 281.2 1204.5 Q290.0 1204.4 296.8 1210.0ZM296.8 1210.0 Q304.3 1204.1 313.7 1203.9 Q306.3 1209.8 296.8 1210.0Z" fill="#8a8a8a" stroke="#8a8a8a" stroke-width="0.8" stroke-linejoin="round"/>
<rect x="379.9" y="1176.2" width="72.2" height="35.2" fill="none" stroke="#f3b12b" stroke-width="1.5"/>
<path d="M380.5 1211 L416 1176.8 L451.5 1211" fill="none" stroke="#f3b12b" stroke-width="1.4"/>
<path d="M416 1177 L416 1211" fill="none" stroke="#f3b12b" stroke-width="1" stroke-opacity="0.6"/>
<rect x="71" y="1235.4" width="443.3" height="23.2" fill="#141414" stroke="#585858" stroke-width="2"/>
<rect x="71" y="1303.3" width="443.3" height="23.0" fill="#141414" stroke="#585858" stroke-width="2"/>
<rect x="470.3" y="1236.2" width="16.8" height="21.8" fill="#fdb92e"/>
<rect x="288.7" y="1304.2" width="16.4" height="21.4" fill="#2a9bd9"/>
<text x="72.0" y="1280.3" font-size="16.5" fill="#bbb" text-anchor="start" font-weight="bold" >-1</text>
<text x="296.0" y="1280.3" font-size="16.5" fill="#bbb" text-anchor="middle" font-weight="bold" >0</text>
<text x="516.0" y="1280.3" font-size="16.5" fill="#bbb" text-anchor="end" font-weight="bold" >+1</text>
<text x="72.0" y="1348.5" font-size="16.5" fill="#bbb" text-anchor="start" font-weight="bold" >L</text>
<text x="296.0" y="1348.5" font-size="16.5" fill="#bbb" text-anchor="middle" font-weight="bold" >C</text>
<text x="518.0" y="1348.5" font-size="16.5" fill="#bbb" text-anchor="end" font-weight="bold" >R</text>
<path d="M639.62 921.34 L642.88 922.50 L642.23 924.93 L638.83 924.30 L637.48 926.62 L639.73 929.26 L637.96 931.03 L635.32 928.78 L633.00 930.13 L633.63 933.53 L631.20 934.18 L630.04 930.92 L627.36 930.92 L626.20 934.18 L623.77 933.53 L624.40 930.13 L622.08 928.78 L619.44 931.03 L617.67 929.26 L619.92 926.62 L618.57 924.30 L615.17 924.93 L614.52 922.50 L617.78 921.34 L617.78 918.66 L614.52 917.50 L615.17 915.07 L618.57 915.70 L619.92 913.38 L617.67 910.74 L619.44 908.97 L622.08 911.22 L624.40 909.87 L623.77 906.47 L626.20 905.82 L627.36 909.08 L630.04 909.08 L631.20 905.82 L633.63 906.47 L633.00 909.87 L635.32 911.22 L637.96 908.97 L639.73 910.74 L637.48 913.38 L638.83 915.70 L642.23 915.07 L642.88 917.50 L639.62 918.66Z M636.30 920.00 A7.6 7.6 0 1 0 621.10 920.00 A7.6 7.6 0 1 0 636.30 920.00Z" fill="#8e8e90" fill-rule="evenodd" stroke="#8e8e90" stroke-width="0.8" stroke-linejoin="round"/>
<path d="M1669.24 910.75 A13.3 13.3 0 1 1 1657.16 910.75" fill="none" stroke="#fdbc38" stroke-width="2.6"/>
<rect x="1660.95" y="907.00" width="4.5" height="13.8" fill="#fdbc38"/>
<g clip-path="url(#cspA)"><g filter="url(#jetA)"><rect x="643" y="950" width="1024.5" height="412" fill="url(#sgb)"/><rect x="652.1" y="950" width="5.9" height="135" fill="url(#sgs)" opacity="1.0"/><rect x="662.0" y="950" width="5.0" height="135" fill="url(#sgs)" opacity="1.0"/><rect x="717.5" y="950" width="5.6" height="135" fill="url(#sgs)" opacity="0.9"/><rect x="730.4" y="950" width="13.1" height="135" fill="url(#sgs)" opacity="1.0"/><rect x="747.4" y="950" width="6.5" height="135" fill="url(#sgs)" opacity="0.9"/><rect x="757.9" y="950" width="6.5" height="135" fill="url(#sgs)" opacity="0.9"/><rect x="772.9" y="950" width="3.5" height="135" fill="url(#sgs)" opacity="0.5"/><rect x="786.4" y="950" width="3.5" height="135" fill="url(#sgs)" opacity="0.5"/><rect x="801.4" y="950" width="5.0" height="135" fill="url(#sgs)" opacity="0.5"/><rect x="818.8" y="950" width="13.1" height="135" fill="url(#sgs)" opacity="1.0"/><rect x="837.4" y="950" width="6.5" height="135" fill="url(#sgs)" opacity="0.9"/><rect x="849.4" y="950" width="5.0" height="135" fill="url(#sgs)" opacity="0.9"/><rect x="862.9" y="950" width="14.0" height="135" fill="url(#sgs)" opacity="1.0"/><rect x="882.4" y="950" width="5.0" height="135" fill="url(#sgs)" opacity="0.9"/><rect x="891.4" y="950" width="10.1" height="135" fill="url(#sgs)" opacity="1.0"/><rect x="951.9" y="950" width="14.0" height="135" fill="url(#sgs)" opacity="1.0"/><rect x="970.8" y="950" width="5.0" height="135" fill="url(#sgs)" opacity="0.9"/><rect x="981.3" y="950" width="8.0" height="135" fill="url(#sgs)" opacity="0.9"/><rect x="994.8" y="950" width="3.5" height="135" fill="url(#sgs)" opacity="0.8"/><rect x="1005.3" y="950" width="3.5" height="135" fill="url(#sgs)" opacity="0.5"/><rect x="1021.8" y="950" width="5.0" height="135" fill="url(#sgs)" opacity="0.7"/><rect x="1035.3" y="950" width="2.6" height="135" fill="url(#sgs)" opacity="0.4"/><rect x="1047.3" y="950" width="6.5" height="135" fill="url(#sgs)" opacity="0.9"/><rect x="1058.7" y="950" width="5.6" height="135" fill="url(#sgs)" opacity="0.9"/><rect x="1068.9" y="950" width="7.4" height="135" fill="url(#sgs)" opacity="0.9"/><rect x="1083.3" y="950" width="14.0" height="135" fill="url(#sgs)" opacity="1.0"/><rect x="1101.3" y="950" width="6.5" height="135" fill="url(#sgs)" opacity="0.9"/><rect x="1113.3" y="950" width="8.0" height="135" fill="url(#sgs)" opacity="0.9"/><rect x="1128.3" y="950" width="8.0" height="135" fill="url(#sgs)" opacity="0.9"/><rect x="1186.2" y="950" width="11.7" height="135" fill="url(#sgs)" opacity="1.0"/><rect x="1203.5" y="950" width="6.6" height="135" fill="url(#sgs)" opacity="0.9"/><rect x="1215.6" y="950" width="15.7" height="135" fill="url(#sgs)" opacity="1.0"/><rect x="1239.8" y="950" width="3.5" height="135" fill="url(#sgs)" opacity="0.5"/><rect x="1253.4" y="950" width="3.5" height="135" fill="url(#sgs)" opacity="0.5"/><rect x="1267.1" y="950" width="3.5" height="135" fill="url(#sgs)" opacity="0.5"/><rect x="1280.7" y="950" width="5.1" height="135" fill="url(#sgs)" opacity="0.9"/><rect x="1291.3" y="950" width="6.6" height="135" fill="url(#sgs)" opacity="0.9"/><rect x="1306.4" y="950" width="12.6" height="135" fill="url(#sgs)" opacity="0.9"/><rect x="1324.6" y="950" width="5.1" height="135" fill="url(#sgs)" opacity="0.8"/><rect x="1335.2" y="950" width="6.6" height="135" fill="url(#sgs)" opacity="0.8"/><rect x="1348.8" y="950" width="15.7" height="135" fill="url(#sgs)" opacity="1.0"/><rect x="1368.5" y="950" width="3.5" height="135" fill="url(#sgs)" opacity="0.7"/><rect x="1423.9" y="950" width="7.2" height="135" fill="url(#sgs)" opacity="1.0"/><rect x="1436.6" y="950" width="5.1" height="135" fill="url(#sgs)" opacity="0.9"/><rect x="1445.7" y="950" width="6.6" height="135" fill="url(#sgs)" opacity="1.0"/><rect x="1457.8" y="950" width="6.6" height="135" fill="url(#sgs)" opacity="0.9"/><rect x="1471.4" y="950" width="5.1" height="135" fill="url(#sgs)" opacity="0.5"/><rect x="1483.5" y="950" width="3.5" height="135" fill="url(#sgs)" opacity="0.5"/><rect x="1494.1" y="950" width="3.5" height="135" fill="url(#sgs)" opacity="0.5"/><rect x="1504.7" y="950" width="3.5" height="135" fill="url(#sgs)" opacity="0.4"/><rect x="1515.3" y="950" width="5.1" height="135" fill="url(#sgs)" opacity="0.9"/><rect x="1525.9" y="950" width="15.7" height="135" fill="url(#sgs)" opacity="1.0"/><rect x="1545.6" y="950" width="6.6" height="135" fill="url(#sgs)" opacity="0.9"/><rect x="1557.7" y="950" width="6.6" height="135" fill="url(#sgs)" opacity="0.9"/><rect x="1571.3" y="950" width="14.1" height="135" fill="url(#sgs)" opacity="1.0"/><rect x="1591.0" y="950" width="5.1" height="135" fill="url(#sgs)" opacity="0.9"/><rect x="1601.6" y="950" width="4.1" height="135" fill="url(#sgs)" opacity="0.9"/><rect x="940" y="1015.2" width="254" height="1.6" fill="#fff" fill-opacity="0.12"/><rect x="1238" y="1015.2" width="84" height="1.6" fill="#fff" fill-opacity="0.12"/><rect x="982" y="1023.2" width="249" height="1.6" fill="#fff" fill-opacity="0.06"/><rect x="1206" y="1023.2" width="10" height="1.6" fill="#fff" fill-opacity="0.13"/><rect x="975" y="1032.2" width="169" height="1.6" fill="#fff" fill-opacity="0.05"/><rect x="947" y="1051.2" width="275" height="1.6" fill="#fff" fill-opacity="0.06"/><rect x="1225" y="1051.2" width="2" height="1.6" fill="#fff" fill-opacity="0.10"/><rect x="946" y="1062.2" width="229" height="1.6" fill="#fff" fill-opacity="0.08"/><rect x="1238" y="1062.2" width="90" height="1.6" fill="#fff" fill-opacity="0.12"/></g></g>
<g mask="url(#mskB)"><g filter="url(#jetB)"><rect x="643" y="950" width="1024.5" height="412" fill="url(#sgb)"/><rect x="652.1" y="950" width="5.9" height="135" fill="url(#sgs)" opacity="1.0"/><rect x="662.0" y="950" width="5.0" height="135" fill="url(#sgs)" opacity="1.0"/><rect x="717.5" y="950" width="5.6" height="135" fill="url(#sgs)" opacity="0.9"/><rect x="730.4" y="950" width="13.1" height="135" fill="url(#sgs)" opacity="1.0"/><rect x="747.4" y="950" width="6.5" height="135" fill="url(#sgs)" opacity="0.9"/><rect x="757.9" y="950" width="6.5" height="135" fill="url(#sgs)" opacity="0.9"/><rect x="772.9" y="950" width="3.5" height="135" fill="url(#sgs)" opacity="0.5"/><rect x="786.4" y="950" width="3.5" height="135" fill="url(#sgs)" opacity="0.5"/><rect x="801.4" y="950" width="5.0" height="135" fill="url(#sgs)" opacity="0.5"/><rect x="818.8" y="950" width="13.1" height="135" fill="url(#sgs)" opacity="1.0"/><rect x="837.4" y="950" width="6.5" height="135" fill="url(#sgs)" opacity="0.9"/><rect x="849.4" y="950" width="5.0" height="135" fill="url(#sgs)" opacity="0.9"/><rect x="862.9" y="950" width="14.0" height="135" fill="url(#sgs)" opacity="1.0"/><rect x="882.4" y="950" width="5.0" height="135" fill="url(#sgs)" opacity="0.9"/><rect x="891.4" y="950" width="10.1" height="135" fill="url(#sgs)" opacity="1.0"/><rect x="951.9" y="950" width="14.0" height="135" fill="url(#sgs)" opacity="1.0"/><rect x="970.8" y="950" width="5.0" height="135" fill="url(#sgs)" opacity="0.9"/><rect x="981.3" y="950" width="8.0" height="135" fill="url(#sgs)" opacity="0.9"/><rect x="994.8" y="950" width="3.5" height="135" fill="url(#sgs)" opacity="0.8"/><rect x="1005.3" y="950" width="3.5" height="135" fill="url(#sgs)" opacity="0.5"/><rect x="1021.8" y="950" width="5.0" height="135" fill="url(#sgs)" opacity="0.7"/><rect x="1035.3" y="950" width="2.6" height="135" fill="url(#sgs)" opacity="0.4"/><rect x="1047.3" y="950" width="6.5" height="135" fill="url(#sgs)" opacity="0.9"/><rect x="1058.7" y="950" width="5.6" height="135" fill="url(#sgs)" opacity="0.9"/><rect x="1068.9" y="950" width="7.4" height="135" fill="url(#sgs)" opacity="0.9"/><rect x="1083.3" y="950" width="14.0" height="135" fill="url(#sgs)" opacity="1.0"/><rect x="1101.3" y="950" width="6.5" height="135" fill="url(#sgs)" opacity="0.9"/><rect x="1113.3" y="950" width="8.0" height="135" fill="url(#sgs)" opacity="0.9"/><rect x="1128.3" y="950" width="8.0" height="135" fill="url(#sgs)" opacity="0.9"/><rect x="1186.2" y="950" width="11.7" height="135" fill="url(#sgs)" opacity="1.0"/><rect x="1203.5" y="950" width="6.6" height="135" fill="url(#sgs)" opacity="0.9"/><rect x="1215.6" y="950" width="15.7" height="135" fill="url(#sgs)" opacity="1.0"/><rect x="1239.8" y="950" width="3.5" height="135" fill="url(#sgs)" opacity="0.5"/><rect x="1253.4" y="950" width="3.5" height="135" fill="url(#sgs)" opacity="0.5"/><rect x="1267.1" y="950" width="3.5" height="135" fill="url(#sgs)" opacity="0.5"/><rect x="1280.7" y="950" width="5.1" height="135" fill="url(#sgs)" opacity="0.9"/><rect x="1291.3" y="950" width="6.6" height="135" fill="url(#sgs)" opacity="0.9"/><rect x="1306.4" y="950" width="12.6" height="135" fill="url(#sgs)" opacity="0.9"/><rect x="1324.6" y="950" width="5.1" height="135" fill="url(#sgs)" opacity="0.8"/><rect x="1335.2" y="950" width="6.6" height="135" fill="url(#sgs)" opacity="0.8"/><rect x="1348.8" y="950" width="15.7" height="135" fill="url(#sgs)" opacity="1.0"/><rect x="1368.5" y="950" width="3.5" height="135" fill="url(#sgs)" opacity="0.7"/><rect x="1423.9" y="950" width="7.2" height="135" fill="url(#sgs)" opacity="1.0"/><rect x="1436.6" y="950" width="5.1" height="135" fill="url(#sgs)" opacity="0.9"/><rect x="1445.7" y="950" width="6.6" height="135" fill="url(#sgs)" opacity="1.0"/><rect x="1457.8" y="950" width="6.6" height="135" fill="url(#sgs)" opacity="0.9"/><rect x="1471.4" y="950" width="5.1" height="135" fill="url(#sgs)" opacity="0.5"/><rect x="1483.5" y="950" width="3.5" height="135" fill="url(#sgs)" opacity="0.5"/><rect x="1494.1" y="950" width="3.5" height="135" fill="url(#sgs)" opacity="0.5"/><rect x="1504.7" y="950" width="3.5" height="135" fill="url(#sgs)" opacity="0.4"/><rect x="1515.3" y="950" width="5.1" height="135" fill="url(#sgs)" opacity="0.9"/><rect x="1525.9" y="950" width="15.7" height="135" fill="url(#sgs)" opacity="1.0"/><rect x="1545.6" y="950" width="6.6" height="135" fill="url(#sgs)" opacity="0.9"/><rect x="1557.7" y="950" width="6.6" height="135" fill="url(#sgs)" opacity="0.9"/><rect x="1571.3" y="950" width="14.1" height="135" fill="url(#sgs)" opacity="1.0"/><rect x="1591.0" y="950" width="5.1" height="135" fill="url(#sgs)" opacity="0.9"/><rect x="1601.6" y="950" width="4.1" height="135" fill="url(#sgs)" opacity="0.9"/><rect x="761" y="1166.0" width="39" height="2" fill="#fff" fill-opacity="0.37"/><rect x="1014" y="1166.0" width="42" height="2" fill="#fff" fill-opacity="0.41"/><rect x="1116" y="1166.0" width="13" height="2" fill="#fff" fill-opacity="0.45"/><rect x="1142" y="1166.0" width="31" height="2" fill="#fff" fill-opacity="0.33"/><rect x="1474" y="1166.0" width="19" height="2" fill="#fff" fill-opacity="0.42"/><rect x="1540" y="1166.0" width="14" height="2" fill="#fff" fill-opacity="0.40"/><rect x="1590" y="1166.0" width="35" height="2" fill="#fff" fill-opacity="0.43"/><rect x="651" y="1181.7" width="11" height="2.6" fill="#fff" fill-opacity="0.21"/><rect x="773" y="1181.7" width="25" height="2.6" fill="#fff" fill-opacity="0.37"/><rect x="867" y="1181.7" width="27" height="2.6" fill="#fff" fill-opacity="0.39"/><rect x="935" y="1181.7" width="28" height="2.6" fill="#fff" fill-opacity="0.31"/><rect x="1028" y="1181.7" width="33" height="2.6" fill="#fff" fill-opacity="0.38"/><rect x="1081" y="1181.7" width="9" height="2.6" fill="#fff" fill-opacity="0.38"/><rect x="1114" y="1181.7" width="17" height="2.6" fill="#fff" fill-opacity="0.35"/><rect x="1141" y="1181.7" width="21" height="2.6" fill="#fff" fill-opacity="0.30"/><rect x="1179" y="1181.7" width="19" height="2.6" fill="#fff" fill-opacity="0.40"/><rect x="1265" y="1181.7" width="15" height="2.6" fill="#fff" fill-opacity="0.38"/><rect x="1285" y="1181.7" width="20" height="2.6" fill="#fff" fill-opacity="0.42"/><rect x="1317" y="1181.7" width="40" height="2.6" fill="#fff" fill-opacity="0.29"/><rect x="1374" y="1181.7" width="41" height="2.6" fill="#fff" fill-opacity="0.26"/><rect x="1421" y="1181.7" width="28" height="2.6" fill="#fff" fill-opacity="0.41"/><rect x="1470" y="1181.7" width="15" height="2.6" fill="#fff" fill-opacity="0.41"/><rect x="1502" y="1181.7" width="38" height="2.6" fill="#fff" fill-opacity="0.23"/><rect x="1549" y="1181.7" width="37" height="2.6" fill="#fff" fill-opacity="0.29"/><rect x="1598" y="1181.7" width="24" height="2.6" fill="#fff" fill-opacity="0.44"/><rect x="1659" y="1181.7" width="1" height="2.6" fill="#fff" fill-opacity="0.45"/><rect x="689" y="1198.7" width="33" height="2.6" fill="#fff" fill-opacity="0.28"/><rect x="732" y="1198.7" width="16" height="2.6" fill="#fff" fill-opacity="0.35"/><rect x="757" y="1198.7" width="38" height="2.6" fill="#fff" fill-opacity="0.43"/><rect x="879" y="1198.7" width="29" height="2.6" fill="#fff" fill-opacity="0.39"/><rect x="988" y="1198.7" width="21" height="2.6" fill="#fff" fill-opacity="0.42"/><rect x="1022" y="1198.7" width="37" height="2.6" fill="#fff" fill-opacity="0.25"/><rect x="1074" y="1198.7" width="38" height="2.6" fill="#fff" fill-opacity="0.41"/><rect x="1212" y="1198.7" width="18" height="2.6" fill="#fff" fill-opacity="0.34"/><rect x="1271" y="1198.7" width="10" height="2.6" fill="#fff" fill-opacity="0.23"/><rect x="1334" y="1198.7" width="27" height="2.6" fill="#fff" fill-opacity="0.28"/><rect x="1414" y="1198.7" width="15" height="2.6" fill="#fff" fill-opacity="0.23"/><rect x="1445" y="1198.7" width="34" height="2.6" fill="#fff" fill-opacity="0.22"/><rect x="1567" y="1198.7" width="24" height="2.6" fill="#fff" fill-opacity="0.33"/><rect x="1646" y="1198.7" width="13" height="2.6" fill="#fff" fill-opacity="0.38"/><rect x="651" y="1221.5" width="24" height="3" fill="#fff" fill-opacity="0.43"/><rect x="741" y="1221.5" width="18" height="3" fill="#fff" fill-opacity="0.23"/><rect x="912" y="1221.5" width="11" height="3" fill="#fff" fill-opacity="0.43"/><rect x="1093" y="1221.5" width="34" height="3" fill="#fff" fill-opacity="0.39"/><rect x="1151" y="1221.5" width="10" height="3" fill="#fff" fill-opacity="0.35"/><rect x="1183" y="1221.5" width="17" height="3" fill="#fff" fill-opacity="0.26"/><rect x="1216" y="1221.5" width="36" height="3" fill="#fff" fill-opacity="0.30"/><rect x="1264" y="1221.5" width="21" height="3" fill="#fff" fill-opacity="0.22"/><rect x="1299" y="1221.5" width="44" height="3" fill="#fff" fill-opacity="0.39"/><rect x="1401" y="1221.5" width="27" height="3" fill="#fff" fill-opacity="0.37"/><rect x="1451" y="1221.5" width="14" height="3" fill="#fff" fill-opacity="0.39"/><rect x="1487" y="1221.5" width="27" height="3" fill="#fff" fill-opacity="0.39"/><rect x="1522" y="1221.5" width="18" height="3" fill="#fff" fill-opacity="0.35"/><rect x="651" y="1243.5" width="16" height="3" fill="#fff" fill-opacity="0.32"/><rect x="678" y="1243.5" width="14" height="3" fill="#fff" fill-opacity="0.28"/><rect x="740" y="1243.5" width="30" height="3" fill="#fff" fill-opacity="0.42"/><rect x="791" y="1243.5" width="29" height="3" fill="#fff" fill-opacity="0.39"/><rect x="888" y="1243.5" width="25" height="3" fill="#fff" fill-opacity="0.26"/><rect x="987" y="1243.5" width="17" height="3" fill="#fff" fill-opacity="0.27"/><rect x="1184" y="1243.5" width="8" height="3" fill="#fff" fill-opacity="0.31"/><rect x="1343" y="1243.5" width="43" height="3" fill="#fff" fill-opacity="0.40"/><rect x="1442" y="1243.5" width="38" height="3" fill="#fff" fill-opacity="0.40"/><rect x="1543" y="1243.5" width="26" height="3" fill="#fff" fill-opacity="0.39"/><rect x="1587" y="1243.5" width="29" height="3" fill="#fff" fill-opacity="0.37"/><rect x="748" y="1234.7" width="20" height="2.6" fill="#fff" fill-opacity="0.22"/><rect x="841" y="1234.7" width="21" height="2.6" fill="#fff" fill-opacity="0.30"/><rect x="1019" y="1234.7" width="18" height="2.6" fill="#fff" fill-opacity="0.23"/><rect x="1057" y="1234.7" width="35" height="2.6" fill="#fff" fill-opacity="0.25"/><rect x="1159" y="1234.7" width="30" height="2.6" fill="#fff" fill-opacity="0.30"/><rect x="1552" y="1234.7" width="28" height="2.6" fill="#fff" fill-opacity="0.33"/><rect x="1646" y="1234.7" width="14" height="2.6" fill="#fff" fill-opacity="0.41"/><rect x="936" y="1209.8" width="26" height="2.4" fill="#fff" fill-opacity="0.21"/><rect x="967" y="1209.8" width="15" height="2.4" fill="#fff" fill-opacity="0.33"/><rect x="1085" y="1209.8" width="23" height="2.4" fill="#fff" fill-opacity="0.43"/><rect x="1163" y="1209.8" width="30" height="2.4" fill="#fff" fill-opacity="0.20"/><rect x="1200" y="1209.8" width="37" height="2.4" fill="#fff" fill-opacity="0.32"/><rect x="1244" y="1209.8" width="16" height="2.4" fill="#fff" fill-opacity="0.30"/><rect x="1267" y="1209.8" width="9" height="2.4" fill="#fff" fill-opacity="0.24"/><rect x="1290" y="1209.8" width="10" height="2.4" fill="#fff" fill-opacity="0.32"/><rect x="1312" y="1209.8" width="34" height="2.4" fill="#fff" fill-opacity="0.30"/><rect x="1509" y="1209.8" width="19" height="2.4" fill="#fff" fill-opacity="0.27"/><rect x="1635" y="1209.8" width="8" height="2.4" fill="#fff" fill-opacity="0.22"/><rect x="1650" y="1209.8" width="9" height="2.4" fill="#fff" fill-opacity="0.37"/><rect x="767" y="1189.8" width="43" height="2.4" fill="#fff" fill-opacity="0.28"/><rect x="990" y="1189.8" width="23" height="2.4" fill="#fff" fill-opacity="0.40"/><rect x="1027" y="1189.8" width="18" height="2.4" fill="#fff" fill-opacity="0.39"/><rect x="1170" y="1189.8" width="12" height="2.4" fill="#fff" fill-opacity="0.42"/><rect x="1304" y="1189.8" width="22" height="2.4" fill="#fff" fill-opacity="0.30"/><rect x="1386" y="1189.8" width="10" height="2.4" fill="#fff" fill-opacity="0.37"/><rect x="1412" y="1189.8" width="8" height="2.4" fill="#fff" fill-opacity="0.45"/><rect x="1522" y="1189.8" width="15" height="2.4" fill="#fff" fill-opacity="0.22"/><rect x="1558" y="1189.8" width="12" height="2.4" fill="#fff" fill-opacity="0.45"/><rect x="1578" y="1189.8" width="41" height="2.4" fill="#fff" fill-opacity="0.32"/><rect x="822" y="1109.0" width="35" height="2" fill="#fff" fill-opacity="0.29"/><rect x="1007" y="1109.0" width="16" height="2" fill="#fff" fill-opacity="0.44"/><rect x="1312" y="1109.0" width="43" height="2" fill="#fff" fill-opacity="0.22"/><rect x="1635" y="1109.0" width="22" height="2" fill="#fff" fill-opacity="0.28"/><rect x="840" y="1093.2" width="14" height="1.6" fill="#fff" fill-opacity="0.25"/><rect x="920" y="1093.2" width="44" height="1.6" fill="#fff" fill-opacity="0.25"/><rect x="996" y="1093.2" width="28" height="1.6" fill="#fff" fill-opacity="0.28"/><rect x="1159" y="1093.2" width="17" height="1.6" fill="#fff" fill-opacity="0.40"/><rect x="1238" y="1093.2" width="18" height="1.6" fill="#fff" fill-opacity="0.20"/><rect x="1426" y="1093.2" width="14" height="1.6" fill="#fff" fill-opacity="0.38"/><rect x="1542" y="1093.2" width="43" height="1.6" fill="#fff" fill-opacity="0.28"/><rect x="810" y="1130.0" width="32" height="2" fill="#fff" fill-opacity="0.44"/><rect x="989" y="1130.0" width="11" height="2" fill="#fff" fill-opacity="0.25"/><rect x="1137" y="1130.0" width="28" height="2" fill="#fff" fill-opacity="0.26"/><rect x="1272" y="1130.0" width="13" height="2" fill="#fff" fill-opacity="0.40"/><rect x="1354" y="1130.0" width="22" height="2" fill="#fff" fill-opacity="0.30"/><rect x="1401" y="1130.0" width="18" height="2" fill="#fff" fill-opacity="0.24"/><rect x="1491" y="1130.0" width="44" height="2" fill="#fff" fill-opacity="0.29"/><path d="M652.5 1256L655.4 1256L655.4 1285L657.0 1303L650.9 1303L652.5 1285Z" fill="url(#sgk)" opacity="0.65"/><path d="M663.6 1256L666.8 1256L666.8 1285L668.4 1303L662.1 1303L663.6 1285Z" fill="url(#sgk)" opacity="0.86"/><path d="M676.0 1256L678.9 1256L678.9 1285L680.8 1303L674.1 1303L676.0 1285Z" fill="url(#sgk)" opacity="0.79"/><path d="M687.4 1256L690.6 1256L690.6 1285L693.2 1303L684.8 1303L687.4 1285Z" fill="url(#sgk)" opacity="0.81"/><path d="M698.7 1256L701.8 1256L701.8 1285L702.9 1303L697.5 1303L698.7 1285Z" fill="url(#sgk)" opacity="0.77"/><path d="M710.4 1256L714.2 1256L714.2 1285L715.0 1303L709.6 1303L710.4 1285Z" fill="url(#sgk)" opacity="0.94"/><path d="M723.0 1256L726.0 1256L726.0 1285L727.6 1303L721.3 1303L723.0 1285Z" fill="url(#sgk)" opacity="0.69"/><path d="M734.4 1256L737.7 1256L737.7 1285L739.3 1303L732.7 1303L734.4 1285Z" fill="url(#sgk)" opacity="0.95"/><path d="M745.0 1256L748.5 1256L748.5 1285L749.8 1303L743.6 1303L745.0 1285Z" fill="url(#sgk)" opacity="0.80"/><path d="M757.0 1256L760.0 1256L760.0 1285L762.1 1303L754.9 1303L757.0 1285Z" fill="url(#sgk)" opacity="0.95"/><path d="M768.1 1256L771.5 1256L771.5 1285L772.7 1303L766.8 1303L768.1 1285Z" fill="url(#sgk)" opacity="0.75"/><path d="M779.8 1256L783.2 1256L783.2 1285L784.3 1303L778.8 1303L779.8 1285Z" fill="url(#sgk)" opacity="0.73"/><path d="M791.6 1256L794.5 1256L794.5 1285L796.5 1303L789.6 1303L791.6 1285Z" fill="url(#sgk)" opacity="0.97"/><path d="M804.6 1256L807.9 1256L807.9 1285L810.2 1303L802.3 1303L804.6 1285Z" fill="url(#sgk)" opacity="0.94"/><path d="M815.5 1256L819.3 1256L819.3 1285L821.1 1303L813.7 1303L815.5 1285Z" fill="url(#sgk)" opacity="0.65"/><path d="M827.1 1256L830.9 1256L830.9 1285L832.4 1303L825.6 1303L827.1 1285Z" fill="url(#sgk)" opacity="0.96"/><path d="M839.0 1256L841.8 1256L841.8 1285L844.3 1303L836.5 1303L839.0 1285Z" fill="url(#sgk)" opacity="0.84"/><path d="M850.5 1256L853.1 1256L853.1 1285L855.0 1303L848.6 1303L850.5 1285Z" fill="url(#sgk)" opacity="0.60"/><path d="M862.0 1256L865.7 1256L865.7 1285L866.9 1303L860.8 1303L862.0 1285Z" fill="url(#sgk)" opacity="0.76"/><path d="M874.5 1256L877.7 1256L877.7 1285L879.7 1303L872.5 1303L874.5 1285Z" fill="url(#sgk)" opacity="0.86"/><path d="M885.6 1256L888.7 1256L888.7 1285L891.4 1303L883.0 1303L885.6 1285Z" fill="url(#sgk)" opacity="0.88"/><path d="M898.4 1256L900.9 1256L900.9 1285L903.4 1303L895.8 1303L898.4 1285Z" fill="url(#sgk)" opacity="1.00"/><path d="M909.3 1256L911.8 1256L911.8 1285L913.9 1303L907.2 1303L909.3 1285Z" fill="url(#sgk)" opacity="0.77"/><path d="M922.0 1256L925.8 1256L925.8 1285L927.0 1303L920.8 1303L922.0 1285Z" fill="url(#sgk)" opacity="0.77"/><path d="M934.1 1256L937.4 1256L937.4 1285L938.7 1303L932.8 1303L934.1 1285Z" fill="url(#sgk)" opacity="0.76"/><path d="M945.8 1256L948.3 1256L948.3 1285L949.7 1303L944.4 1303L945.8 1285Z" fill="url(#sgk)" opacity="0.97"/><path d="M957.0 1256L960.3 1256L960.3 1285L961.4 1303L955.9 1303L957.0 1285Z" fill="url(#sgk)" opacity="0.69"/><path d="M969.4 1256L972.5 1256L972.5 1285L974.4 1303L967.5 1303L969.4 1285Z" fill="url(#sgk)" opacity="0.71"/><path d="M980.3 1256L984.3 1256L984.3 1285L985.8 1303L978.9 1303L980.3 1285Z" fill="url(#sgk)" opacity="0.68"/><path d="M993.1 1256L996.0 1256L996.0 1285L997.4 1303L991.7 1303L993.1 1285Z" fill="url(#sgk)" opacity="0.81"/><path d="M1003.5 1256L1006.9 1256L1006.9 1285L1009.0 1303L1001.4 1303L1003.5 1285Z" fill="url(#sgk)" opacity="0.96"/><path d="M1015.8 1256L1019.6 1256L1019.6 1285L1020.7 1303L1014.8 1303L1015.8 1285Z" fill="url(#sgk)" opacity="0.62"/><path d="M1027.1 1256L1030.2 1256L1030.2 1285L1031.5 1303L1025.7 1303L1027.1 1285Z" fill="url(#sgk)" opacity="0.95"/><path d="M1040.0 1256L1042.8 1256L1042.8 1285L1045.5 1303L1037.3 1303L1040.0 1285Z" fill="url(#sgk)" opacity="0.65"/><path d="M1050.4 1256L1054.2 1256L1054.2 1285L1055.2 1303L1049.4 1303L1050.4 1285Z" fill="url(#sgk)" opacity="0.67"/><path d="M1063.0 1256L1065.5 1256L1065.5 1285L1067.5 1303L1061.0 1303L1063.0 1285Z" fill="url(#sgk)" opacity="0.94"/><path d="M1073.2 1256L1077.0 1256L1077.0 1285L1078.4 1303L1071.9 1303L1073.2 1285Z" fill="url(#sgk)" opacity="0.76"/><path d="M1085.9 1256L1088.6 1256L1088.6 1285L1090.3 1303L1084.2 1303L1085.9 1285Z" fill="url(#sgk)" opacity="0.88"/><path d="M1097.3 1256L1100.2 1256L1100.2 1285L1101.7 1303L1095.8 1303L1097.3 1285Z" fill="url(#sgk)" opacity="0.78"/><path d="M1109.1 1256L1112.4 1256L1112.4 1285L1114.5 1303L1107.0 1303L1109.1 1285Z" fill="url(#sgk)" opacity="0.69"/><path d="M1121.5 1256L1125.0 1256L1125.0 1285L1126.1 1303L1120.3 1303L1121.5 1285Z" fill="url(#sgk)" opacity="0.90"/><path d="M1133.3 1256L1136.3 1256L1136.3 1285L1138.4 1303L1131.3 1303L1133.3 1285Z" fill="url(#sgk)" opacity="0.85"/><path d="M1144.1 1256L1147.2 1256L1147.2 1285L1149.5 1303L1141.8 1303L1144.1 1285Z" fill="url(#sgk)" opacity="0.94"/><path d="M1156.8 1256L1160.0 1256L1160.0 1285L1161.4 1303L1155.4 1303L1156.8 1285Z" fill="url(#sgk)" opacity="0.96"/><path d="M1167.7 1256L1171.2 1256L1171.2 1285L1173.4 1303L1165.5 1303L1167.7 1285Z" fill="url(#sgk)" opacity="0.99"/><path d="M1181.3 1256L1184.2 1256L1184.2 1285L1186.1 1303L1179.4 1303L1181.3 1285Z" fill="url(#sgk)" opacity="0.67"/><path d="M1191.4 1256L1195.0 1256L1195.0 1285L1196.9 1303L1189.4 1303L1191.4 1285Z" fill="url(#sgk)" opacity="0.83"/><path d="M1204.0 1256L1206.6 1256L1206.6 1285L1209.3 1303L1201.3 1303L1204.0 1285Z" fill="url(#sgk)" opacity="0.79"/><path d="M1216.1 1256L1219.4 1256L1219.4 1285L1221.0 1303L1214.4 1303L1216.1 1285Z" fill="url(#sgk)" opacity="0.80"/><path d="M1227.7 1256L1231.1 1256L1231.1 1285L1232.3 1303L1226.5 1303L1227.7 1285Z" fill="url(#sgk)" opacity="0.64"/><path d="M1238.8 1256L1242.4 1256L1242.4 1285L1243.7 1303L1237.5 1303L1238.8 1285Z" fill="url(#sgk)" opacity="0.96"/><path d="M1250.4 1256L1254.2 1256L1254.2 1285L1256.5 1303L1248.2 1303L1250.4 1285Z" fill="url(#sgk)" opacity="0.93"/><path d="M1261.8 1256L1265.4 1256L1265.4 1285L1266.2 1303L1261.0 1303L1261.8 1285Z" fill="url(#sgk)" opacity="0.87"/><path d="M1273.7 1256L1277.2 1256L1277.2 1285L1278.8 1303L1272.1 1303L1273.7 1285Z" fill="url(#sgk)" opacity="0.83"/><path d="M1286.5 1256L1289.3 1256L1289.3 1285L1291.4 1303L1284.4 1303L1286.5 1285Z" fill="url(#sgk)" opacity="0.75"/><path d="M1298.1 1256L1300.6 1256L1300.6 1285L1302.5 1303L1296.2 1303L1298.1 1285Z" fill="url(#sgk)" opacity="0.89"/><path d="M1309.5 1256L1312.1 1256L1312.1 1285L1313.7 1303L1307.9 1303L1309.5 1285Z" fill="url(#sgk)" opacity="0.76"/><path d="M1320.3 1256L1323.6 1256L1323.6 1285L1324.7 1303L1319.3 1303L1320.3 1285Z" fill="url(#sgk)" opacity="0.79"/><path d="M1333.1 1256L1335.9 1256L1335.9 1285L1337.4 1303L1331.6 1303L1333.1 1285Z" fill="url(#sgk)" opacity="0.64"/><path d="M1345.5 1256L1348.7 1256L1348.7 1285L1351.1 1303L1343.1 1303L1345.5 1285Z" fill="url(#sgk)" opacity="0.81"/><path d="M1355.6 1256L1358.7 1256L1358.7 1285L1360.2 1303L1354.1 1303L1355.6 1285Z" fill="url(#sgk)" opacity="0.73"/><path d="M1367.0 1256L1370.9 1256L1370.9 1285L1373.1 1303L1364.9 1303L1367.0 1285Z" fill="url(#sgk)" opacity="0.79"/><path d="M1379.5 1256L1382.6 1256L1382.6 1285L1385.2 1303L1376.9 1303L1379.5 1285Z" fill="url(#sgk)" opacity="0.67"/><path d="M1391.6 1256L1394.9 1256L1394.9 1285L1396.2 1303L1390.4 1303L1391.6 1285Z" fill="url(#sgk)" opacity="0.69"/><path d="M1403.6 1256L1407.6 1256L1407.6 1285L1409.4 1303L1401.8 1303L1403.6 1285Z" fill="url(#sgk)" opacity="0.96"/><path d="M1415.9 1256L1418.4 1256L1418.4 1285L1421.0 1303L1413.4 1303L1415.9 1285Z" fill="url(#sgk)" opacity="0.69"/><path d="M1427.9 1256L1431.0 1256L1431.0 1285L1432.6 1303L1426.3 1303L1427.9 1285Z" fill="url(#sgk)" opacity="0.90"/><path d="M1439.3 1256L1441.9 1256L1441.9 1285L1443.6 1303L1437.6 1303L1439.3 1285Z" fill="url(#sgk)" opacity="0.80"/><path d="M1451.2 1256L1454.2 1256L1454.2 1285L1456.5 1303L1448.9 1303L1451.2 1285Z" fill="url(#sgk)" opacity="0.80"/><path d="M1461.9 1256L1465.4 1256L1465.4 1285L1467.5 1303L1459.7 1303L1461.9 1285Z" fill="url(#sgk)" opacity="0.70"/><path d="M1474.0 1256L1477.3 1256L1477.3 1285L1478.9 1303L1472.5 1303L1474.0 1285Z" fill="url(#sgk)" opacity="0.62"/><path d="M1486.2 1256L1488.9 1256L1488.9 1285L1490.5 1303L1484.6 1303L1486.2 1285Z" fill="url(#sgk)" opacity="0.90"/><path d="M1498.3 1256L1501.5 1256L1501.5 1285L1503.9 1303L1495.9 1303L1498.3 1285Z" fill="url(#sgk)" opacity="0.89"/><path d="M1508.3 1256L1511.3 1256L1511.3 1285L1513.3 1303L1506.3 1303L1508.3 1285Z" fill="url(#sgk)" opacity="0.90"/><path d="M1520.0 1256L1523.8 1256L1523.8 1285L1524.8 1303L1519.1 1303L1520.0 1285Z" fill="url(#sgk)" opacity="0.99"/><path d="M1532.4 1256L1536.0 1256L1536.0 1285L1538.0 1303L1530.4 1303L1532.4 1285Z" fill="url(#sgk)" opacity="0.66"/><path d="M1544.7 1256L1548.0 1256L1548.0 1285L1549.9 1303L1542.8 1303L1544.7 1285Z" fill="url(#sgk)" opacity="0.66"/><path d="M1556.7 1256L1559.3 1256L1559.3 1285L1562.0 1303L1554.0 1303L1556.7 1285Z" fill="url(#sgk)" opacity="0.66"/><path d="M1567.5 1256L1569.9 1256L1569.9 1285L1572.5 1303L1564.8 1303L1567.5 1285Z" fill="url(#sgk)" opacity="0.76"/><path d="M1580.7 1256L1583.8 1256L1583.8 1285L1585.8 1303L1578.7 1303L1580.7 1285Z" fill="url(#sgk)" opacity="0.71"/><path d="M1590.2 1256L1593.8 1256L1593.8 1285L1595.1 1303L1589.0 1303L1590.2 1285Z" fill="url(#sgk)" opacity="0.88"/><path d="M1602.5 1256L1605.2 1256L1605.2 1285L1607.2 1303L1600.4 1303L1602.5 1285Z" fill="url(#sgk)" opacity="0.73"/><path d="M1613.7 1256L1617.7 1256L1617.7 1285L1619.6 1303L1611.8 1303L1613.7 1285Z" fill="url(#sgk)" opacity="0.76"/><path d="M1626.3 1256L1630.0 1256L1630.0 1285L1631.8 1303L1624.5 1303L1626.3 1285Z" fill="url(#sgk)" opacity="0.73"/><path d="M1638.5 1256L1641.3 1256L1641.3 1285L1643.8 1303L1636.0 1303L1638.5 1285Z" fill="url(#sgk)" opacity="0.74"/><path d="M1650.2 1256L1653.0 1256L1653.0 1285L1654.3 1303L1648.8 1303L1650.2 1285Z" fill="url(#sgk)" opacity="0.73"/></g></g>
<g mask="url(#mskC)"><g filter="url(#jetC)"><rect x="643" y="950" width="1024.5" height="412" fill="url(#sgb)"/></g></g>
<rect x="649.1" y="956.1" width="1.9" height="399.7" fill="#a6a6aa"/>
<rect x="1659.5" y="956.1" width="1.8" height="399.7" fill="#a6a6aa"/>
<rect x="649.1" y="956.1" width="1012.2" height="1.9" fill="#a6a6aa"/>
<rect x="649.1" y="1354" width="1012.2" height="1.8" fill="#a6a6aa"/>
<rect x="643.5" y="1351.1" width="6.5" height="2" fill="#a6a6aa"/>
<rect x="643.5" y="1327.9" width="6.5" height="2" fill="#a6a6aa"/>
<text x="643.0" y="1334.8" font-size="17" fill="#a6a6a6" text-anchor="end" font-weight="bold" letter-spacing="0.45">30</text>
<rect x="643.5" y="1311.5" width="6.5" height="2" fill="#a6a6aa"/>
<rect x="643.5" y="1298.7" width="6.5" height="2" fill="#a6a6aa"/>
<rect x="643.5" y="1288.3" width="6.5" height="2" fill="#a6a6aa"/>
<rect x="643.5" y="1279.5" width="6.5" height="2" fill="#a6a6aa"/>
<rect x="643.5" y="1271.9" width="6.5" height="2" fill="#a6a6aa"/>
<rect x="643.5" y="1265.1" width="6.5" height="2" fill="#a6a6aa"/>
<rect x="643.5" y="1259.1" width="6.5" height="2" fill="#a6a6aa"/>
<text x="643.0" y="1266.0" font-size="17" fill="#a6a6a6" text-anchor="end" font-weight="bold" letter-spacing="0.45">100</text>
<rect x="643.5" y="1219.5" width="6.5" height="2" fill="#a6a6aa"/>
<rect x="643.5" y="1196.3" width="6.5" height="2" fill="#a6a6aa"/>
<text x="643.0" y="1203.2" font-size="17" fill="#a6a6a6" text-anchor="end" font-weight="bold" letter-spacing="0.45">300</text>
<rect x="643.5" y="1179.9" width="6.5" height="2" fill="#a6a6aa"/>
<rect x="643.5" y="1167.1" width="6.5" height="2" fill="#a6a6aa"/>
<rect x="643.5" y="1156.7" width="6.5" height="2" fill="#a6a6aa"/>
<rect x="643.5" y="1147.9" width="6.5" height="2" fill="#a6a6aa"/>
<rect x="643.5" y="1140.3" width="6.5" height="2" fill="#a6a6aa"/>
<rect x="643.5" y="1133.5" width="6.5" height="2" fill="#a6a6aa"/>
<rect x="643.5" y="1127.5" width="6.5" height="2" fill="#a6a6aa"/>
<text x="643.0" y="1134.4" font-size="17" fill="#a6a6a6" text-anchor="end" font-weight="bold" letter-spacing="0.45">1k</text>
<rect x="643.5" y="1087.9" width="6.5" height="2" fill="#a6a6aa"/>
<rect x="643.5" y="1064.7" width="6.5" height="2" fill="#a6a6aa"/>
<text x="643.0" y="1071.6" font-size="17" fill="#a6a6a6" text-anchor="end" font-weight="bold" letter-spacing="0.45">3k</text>
<rect x="643.5" y="1048.3" width="6.5" height="2" fill="#a6a6aa"/>
<rect x="643.5" y="1035.5" width="6.5" height="2" fill="#a6a6aa"/>
<rect x="643.5" y="1025.1" width="6.5" height="2" fill="#a6a6aa"/>
<rect x="643.5" y="1016.3" width="6.5" height="2" fill="#a6a6aa"/>
<rect x="643.5" y="1008.7" width="6.5" height="2" fill="#a6a6aa"/>
<rect x="643.5" y="1001.9" width="6.5" height="2" fill="#a6a6aa"/>
<rect x="643.5" y="995.9" width="6.5" height="2" fill="#a6a6aa"/>
<text x="643.0" y="1002.8" font-size="17" fill="#a6a6a6" text-anchor="end" font-weight="bold" letter-spacing="0.45">10k</text>
<rect x="643.5" y="956.3" width="6.5" height="2" fill="#a6a6aa"/>
<text x="643.0" y="963.2" font-size="17" fill="#a6a6a6" text-anchor="end" font-weight="bold" letter-spacing="0.45">20k</text>
<rect x="1659.0" y="1355" width="1.9" height="7" fill="#a6a6aa"/>
<text x="1660.2" y="1379.8" font-size="17" fill="#a6a6a6" text-anchor="middle" font-weight="bold" letter-spacing="0.45">0s</text>
<rect x="1612.1" y="1355" width="1.9" height="7" fill="#a6a6aa"/>
<text x="1613.3" y="1379.8" font-size="17" fill="#a6a6a6" text-anchor="middle" font-weight="bold" letter-spacing="0.45">2s</text>
<rect x="1565.1" y="1355" width="1.9" height="7" fill="#a6a6aa"/>
<text x="1566.3" y="1379.8" font-size="17" fill="#a6a6a6" text-anchor="middle" font-weight="bold" letter-spacing="0.45">4s</text>
<rect x="1518.2" y="1355" width="1.9" height="7" fill="#a6a6aa"/>
<text x="1519.4" y="1379.8" font-size="17" fill="#a6a6a6" text-anchor="middle" font-weight="bold" letter-spacing="0.45">6s</text>
<rect x="1471.2" y="1355" width="1.9" height="7" fill="#a6a6aa"/>
<text x="1472.4" y="1379.8" font-size="17" fill="#a6a6a6" text-anchor="middle" font-weight="bold" letter-spacing="0.45">8s</text>
<rect x="1424.3" y="1355" width="1.9" height="7" fill="#a6a6aa"/>
<text x="1425.5" y="1379.8" font-size="17" fill="#a6a6a6" text-anchor="middle" font-weight="bold" letter-spacing="0.45">10s</text>
<rect x="1377.3" y="1355" width="1.9" height="7" fill="#a6a6aa"/>
<text x="1378.5" y="1379.8" font-size="17" fill="#a6a6a6" text-anchor="middle" font-weight="bold" letter-spacing="0.45">12s</text>
<rect x="1330.4" y="1355" width="1.9" height="7" fill="#a6a6aa"/>
<text x="1331.6" y="1379.8" font-size="17" fill="#a6a6a6" text-anchor="middle" font-weight="bold" letter-spacing="0.45">14s</text>
<rect x="1283.4" y="1355" width="1.9" height="7" fill="#a6a6aa"/>
<text x="1284.6" y="1379.8" font-size="17" fill="#a6a6a6" text-anchor="middle" font-weight="bold" letter-spacing="0.45">16s</text>
<rect x="1236.5" y="1355" width="1.9" height="7" fill="#a6a6aa"/>
<text x="1237.7" y="1379.8" font-size="17" fill="#a6a6a6" text-anchor="middle" font-weight="bold" letter-spacing="0.45">18s</text>
<rect x="1189.5" y="1355" width="1.9" height="7" fill="#a6a6aa"/>
<text x="1190.7" y="1379.8" font-size="17" fill="#a6a6a6" text-anchor="middle" font-weight="bold" letter-spacing="0.45">20s</text>
<rect x="1142.6" y="1355" width="1.9" height="7" fill="#a6a6aa"/>
<text x="1143.8" y="1379.8" font-size="17" fill="#a6a6a6" text-anchor="middle" font-weight="bold" letter-spacing="0.45">22s</text>
<rect x="1095.6" y="1355" width="1.9" height="7" fill="#a6a6aa"/>
<text x="1096.8" y="1379.8" font-size="17" fill="#a6a6a6" text-anchor="middle" font-weight="bold" letter-spacing="0.45">24s</text>
<rect x="1048.7" y="1355" width="1.9" height="7" fill="#a6a6aa"/>
<text x="1049.9" y="1379.8" font-size="17" fill="#a6a6a6" text-anchor="middle" font-weight="bold" letter-spacing="0.45">26s</text>
<rect x="1001.7" y="1355" width="1.9" height="7" fill="#a6a6aa"/>
<text x="1002.9" y="1379.8" font-size="17" fill="#a6a6a6" text-anchor="middle" font-weight="bold" letter-spacing="0.45">28s</text>
<rect x="954.8" y="1355" width="1.9" height="7" fill="#a6a6aa"/>
<text x="956.0" y="1379.8" font-size="17" fill="#a6a6a6" text-anchor="middle" font-weight="bold" letter-spacing="0.45">30s</text>
<rect x="907.8" y="1355" width="1.9" height="7" fill="#a6a6aa"/>
<text x="909.0" y="1379.8" font-size="17" fill="#a6a6a6" text-anchor="middle" font-weight="bold" letter-spacing="0.45">32s</text>
<rect x="860.9" y="1355" width="1.9" height="7" fill="#a6a6aa"/>
<text x="862.1" y="1379.8" font-size="17" fill="#a6a6a6" text-anchor="middle" font-weight="bold" letter-spacing="0.45">34s</text>
<rect x="813.9" y="1355" width="1.9" height="7" fill="#a6a6aa"/>
<text x="815.1" y="1379.8" font-size="17" fill="#a6a6a6" text-anchor="middle" font-weight="bold" letter-spacing="0.45">36s</text>
<rect x="767.0" y="1355" width="1.9" height="7" fill="#a6a6aa"/>
<text x="768.2" y="1379.8" font-size="17" fill="#a6a6a6" text-anchor="middle" font-weight="bold" letter-spacing="0.45">38s</text>
<rect x="720.0" y="1355" width="1.9" height="7" fill="#a6a6aa"/>
<text x="721.2" y="1379.8" font-size="17" fill="#a6a6a6" text-anchor="middle" font-weight="bold" letter-spacing="0.45">40s</text>
<rect x="673.1" y="1355" width="1.9" height="7" fill="#a6a6aa"/>
<text x="674.3" y="1379.8" font-size="17" fill="#a6a6a6" text-anchor="middle" font-weight="bold" letter-spacing="0.45">42s</text>
</svg>
</div></body></html>
